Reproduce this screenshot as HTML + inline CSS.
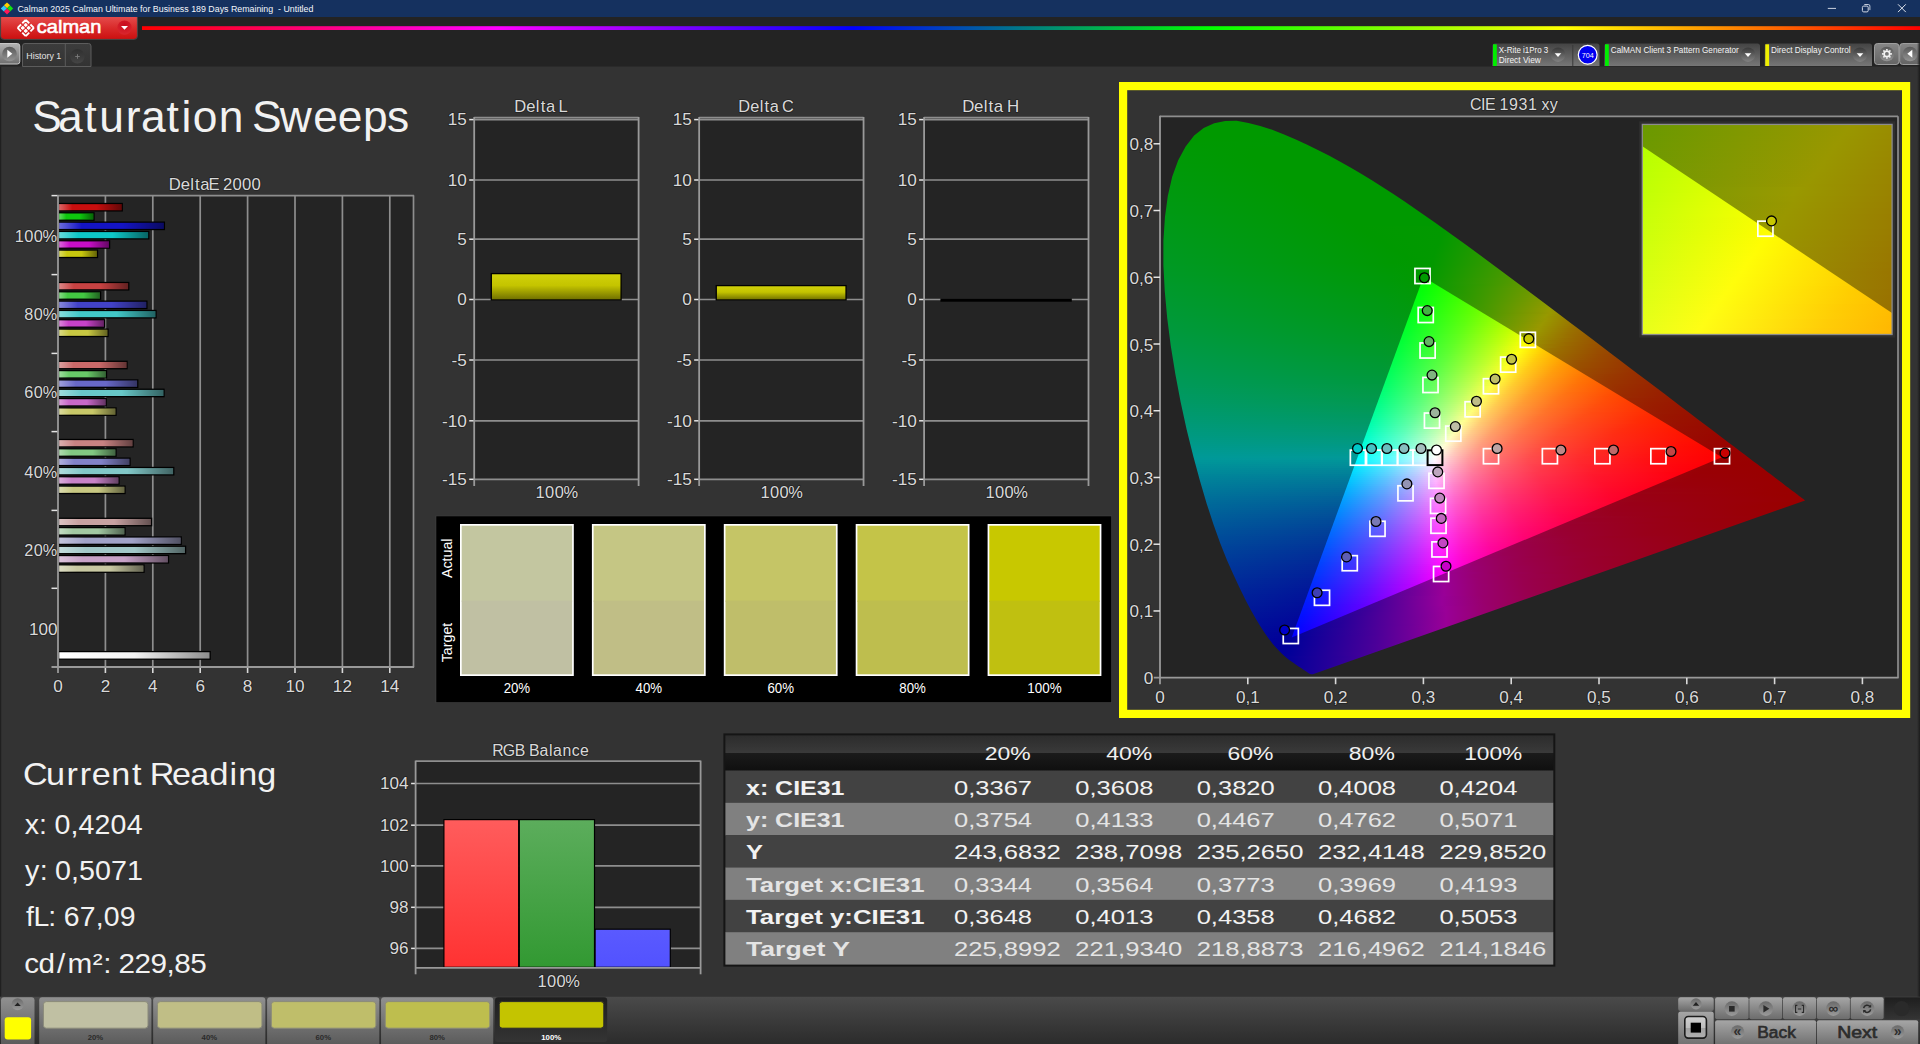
<!DOCTYPE html>
<html lang="en"><head><meta charset="utf-8"><title>Calman - Saturation Sweeps</title>
<style>
html,body{margin:0;padding:0;background:#333;overflow:hidden}
body{width:1920px;height:1044px;position:relative;font-family:"Liberation Sans",sans-serif}
svg{position:absolute;left:0;top:0;font-family:"Liberation Sans",sans-serif}
.g{position:absolute}
.h{paint-order:stroke;stroke:#222;stroke-width:1.6px;stroke-linejoin:round}
.g i{display:block;height:2px}
.r3 i{height:3px}
</style></head>
<body>
<svg width="1920" height="1044" viewBox="0 0 1920 1044">
<defs><linearGradient id="gred" x1="0" y1="0" x2="0" y2="1"><stop offset="0" stop-color="#e44b4b"/><stop offset=".5" stop-color="#d92a2a"/><stop offset="1" stop-color="#cc1010"/></linearGradient>
<radialGradient id="gdd" cx=".5" cy=".3" r=".8"><stop offset="0" stop-color="#c80c1c"/><stop offset="1" stop-color="#dc2a30"/></radialGradient>
<linearGradient id="grb" x1="142" y1="0" x2="1920" y2="0" gradientUnits="userSpaceOnUse"><stop offset="0" stop-color="#f00"/><stop offset=".2" stop-color="#f0f"/><stop offset=".4" stop-color="#00f"/><stop offset=".6" stop-color="#0f0"/><stop offset=".8" stop-color="#ff0"/><stop offset="1" stop-color="#f00"/></linearGradient>
<linearGradient id="gbtn" x1="0" y1="0" x2="0" y2="1"><stop offset="0" stop-color="#b4b4b4"/><stop offset="1" stop-color="#6e6e6e"/></linearGradient>
<linearGradient id="gcir" x1="0" y1="0" x2="0" y2="1"><stop offset="0" stop-color="#585858"/><stop offset="1" stop-color="#949494"/></linearGradient>
<linearGradient id="gtab" x1="0" y1="0" x2="0" y2="1"><stop offset="0" stop-color="#3c3c3c"/><stop offset="1" stop-color="#333"/></linearGradient>
<linearGradient id="gplus" x1="0" y1="0" x2="0" y2="1"><stop offset="0" stop-color="#303030"/><stop offset="1" stop-color="#454545"/></linearGradient>
<linearGradient id="gpan" x1="0" y1="0" x2="0" y2="1"><stop offset="0" stop-color="#444"/><stop offset="1" stop-color="#767676"/></linearGradient>
<linearGradient id="gdc" x1="0" y1="0" x2="0" y2="1"><stop offset="0" stop-color="#393939"/><stop offset="1" stop-color="#828282"/></linearGradient>
<linearGradient id="gbtn2" x1="0" y1="0" x2="0" y2="1"><stop offset="0" stop-color="#868686"/><stop offset="1" stop-color="#646464"/></linearGradient>
<linearGradient id="gedge2" x1="0" y1="0" x2="1" y2="0"><stop offset="0" stop-color="#1a1a1a" stop-opacity="0"/><stop offset="1" stop-color="#1a1a1a" stop-opacity=".95"/></linearGradient>
<linearGradient id="ggl" x1="0" y1="0" x2="1" y2="0"><stop offset="0" stop-color="#fff" stop-opacity=".38"/><stop offset=".22" stop-color="#fff" stop-opacity="0"/><stop offset=".6" stop-color="#000" stop-opacity="0"/><stop offset="1" stop-color="#000" stop-opacity=".5"/></linearGradient>
<linearGradient id="gwh" x1="0" y1="0" x2="1" y2="0"><stop offset="0" stop-color="#fff"/><stop offset=".5" stop-color="#f2f2f2"/><stop offset="1" stop-color="#8c8c8c"/></linearGradient>
<linearGradient id="gyb" x1="0" y1="0" x2="0" y2="1"><stop offset="0" stop-color="#d2d20a"/><stop offset=".45" stop-color="#c4c400"/><stop offset="1" stop-color="#6e6e00"/></linearGradient>
<linearGradient id="gr1" x1="0" y1="0" x2="0" y2="1"><stop offset="0" stop-color="#ff5c5c"/><stop offset="1" stop-color="#ff3232"/></linearGradient>
<linearGradient id="gg1" x1="0" y1="0" x2="0" y2="1"><stop offset="0" stop-color="#5cad5c"/><stop offset="1" stop-color="#329932"/></linearGradient>
<linearGradient id="gb1" x1="0" y1="0" x2="0" y2="1"><stop offset="0" stop-color="#5a5aff"/><stop offset="1" stop-color="#5252ff"/></linearGradient>
<linearGradient id="gth" x1="0" y1="0" x2="0" y2="1"><stop offset="0" stop-color="#2c2c2c"/><stop offset=".5" stop-color="#3a3a3a"/><stop offset=".5" stop-color="#1b1b1b"/><stop offset="1" stop-color="#0f0f0f"/></linearGradient>
<linearGradient id="gst" x1="0" y1="0" x2="0" y2="1"><stop offset="0" stop-color="#4a4a4a"/><stop offset="1" stop-color="#2b2b2b"/></linearGradient>
<linearGradient id="gsb" x1="0" y1="0" x2="0" y2="1"><stop offset="0" stop-color="#909090"/><stop offset="1" stop-color="#585858"/></linearGradient>
<linearGradient id="gsd" x1="0" y1="0" x2="0" y2="1"><stop offset="0" stop-color="#1e1e1e"/><stop offset="1" stop-color="#343434"/></linearGradient>
<linearGradient id="gcir2" x1="0" y1="0" x2="0" y2="1"><stop offset="0" stop-color="#6a6a6a"/><stop offset="1" stop-color="#9a9a9a"/></linearGradient>
<linearGradient id="gsb2" x1="0" y1="0" x2="0" y2="1"><stop offset="0" stop-color="#a6a6a6"/><stop offset="1" stop-color="#6c6c6c"/></linearGradient>
<linearGradient id="gstop" x1="0" y1="0" x2="0" y2="1"><stop offset="0" stop-color="#d0d0d0"/><stop offset=".55" stop-color="#bdbdbd"/><stop offset=".55" stop-color="#a2a2a2"/><stop offset="1" stop-color="#b0b0b0"/></linearGradient></defs>
<rect x="0" y="0" width="1920" height="17" fill="#15315f"/>
<rect x="0" y="17" width="1920" height="49.5" fill="#232323"/>
<g transform="translate(7,8.35) scale(.93)"><path d="M0-6.4L3.3-3.2 0 0-3.3-3.2z" fill="#ffd000"/><path d="M-3.4-3.1L-0.1.1-3.4 3.3-6.7.1z" fill="#30c8ff"/><path d="M3.4-3.1L6.7.1 3.4 3.3.1.1z" fill="#10e410"/><path d="M0 .2L3.3 3.4 0 6.6-3.3 3.4z" fill="#ff1858"/></g>
<text x="17.4" y="12.2" font-size="9.7" fill="#f4f6fa" textLength="296" lengthAdjust="spacingAndGlyphs" style="white-space:pre">Calman 2025 Calman Ultimate for Business 189 Days Remaining  - Untitled</text>
<line x1="1827.8" y1="8.4" x2="1836" y2="8.4" stroke="#ccd3e0" stroke-width="1"/>
<rect x="1862.4" y="6.1" width="5.8" height="5.8" rx="1.3" fill="none" stroke="#d4dae6"/><path d="M1864.3 4.5h4a1.6 1.6 0 0 1 1.6 1.6v4" fill="none" stroke="#d4dae6" stroke-width=".9"/>
<path d="M1898 4.3l7.8 7.8M1905.8 4.3l-7.8 7.8" stroke="#e0e5ee" stroke-width="1" fill="none"/>
<path d="M.8 17H137.2V36a3 3 0 0 1-3 3H3.8a3 3 0 0 1-3-3z" fill="url(#gred)"/><path d="M.6 17V36.2a3.2 3.2 0 0 0 3.2 3.2H134.2a3.2 3.2 0 0 0 3.2-3.2V17" fill="none" stroke="#4e4646" stroke-width="1"/>
<g transform="translate(25.75,27.95) rotate(45)" fill="#fff"><rect x="-5.75" y="-5.75" width="11.5" height="11.5" fill="none" stroke="#fff" stroke-width="1.9" stroke-linejoin="round" stroke-dasharray="4.9 1.7 4.9 0"/><rect x="-3.65" y="-3.65" width="3.1" height="3.1" rx=".5"/><rect x="-3.65" y="0.55" width="3.1" height="3.1" rx=".5"/><rect x="0.55" y="-3.65" width="3.1" height="3.1" rx=".5"/><rect x="0.55" y="0.55" width="3.1" height="3.1" rx=".5"/></g>
<text x="36.8" y="32.8" font-size="19.2" fill="#fff" textLength="64.6" lengthAdjust="spacingAndGlyphs" stroke="#fff" stroke-width=".6">calman</text>
<circle cx="124.5" cy="27.6" r="7.2" fill="url(#gdd)"/><path d="M121 26h7l-3.5 3.8z" fill="#fff"/>
<rect x="142" y="26.2" width="1778" height="3.8" fill="url(#grb)"/>
<rect x="-3" y="43.5" width="22.8" height="20.5" rx="2.5" fill="url(#gbtn)" stroke="#c8c8c8" stroke-width="1"/>
<circle cx="9.5" cy="54" r="7.3" fill="url(#gcir)"/><path d="M7.3 49.8v8l5-4z" fill="#fff"/>
<path d="M22.5 66.5V46a2.5 2.5 0 0 1 2.5-2.5H88.5a2.5 2.5 0 0 1 2.5 2.5V66.5z" fill="url(#gtab)" stroke="#5c5c5c" stroke-width="1"/>
<line x1="65.3" y1="44" x2="65.3" y2="66" stroke="#5c5c5c" stroke-width="1"/>
<text x="26.3" y="58.7" font-size="9.3" fill="#e4e4e4" textLength="35" lengthAdjust="spacingAndGlyphs">History 1</text>
<circle cx="77.4" cy="56.3" r="7.2" fill="url(#gplus)"/><path d="M75.2 56.5h4.6M77.5 54.2v4.6" stroke="#7a7a7a" stroke-width=".9"/>
<path d="M1492.5 66V46a2.5 2.5 0 0 1 2.5-2.5H1597a2.5 2.5 0 0 1 2.5 2.5V66z" fill="url(#gpan)"/><rect x="1493" y="44.3" width="3.8" height="21.7" fill="#0e0"/><text x="1498.8" y="52.6" font-size="8.7" fill="#f4f4f4" textLength="49.5" lengthAdjust="spacingAndGlyphs">X-Rite i1Pro 3</text><text x="1498.8" y="63.2" font-size="8.7" fill="#f4f4f4" textLength="42" lengthAdjust="spacingAndGlyphs">Direct View</text><circle cx="1558" cy="54.7" r="7.2" fill="url(#gdc)"/><path d="M1554.7 53.3h6.6l-3.3 3.6z" fill="#fff"/>
<line x1="1572.8" y1="45" x2="1572.8" y2="66" stroke="#3a3a3a" stroke-width="1"/>
<circle cx="1587.7" cy="54.7" r="9.4" fill="#0000f0" stroke="#fff" stroke-width="1.2"/>
<text x="1587.7" y="57.5" font-size="7.6" fill="#fff" text-anchor="middle" textLength="12" lengthAdjust="spacingAndGlyphs">704</text>
<path d="M1604.5 66V46a2.5 2.5 0 0 1 2.5-2.5H1757.5a2.5 2.5 0 0 1 2.5 2.5V66z" fill="url(#gpan)"/><rect x="1605" y="44.3" width="3.8" height="21.7" fill="#0e0"/><text x="1610.8" y="52.6" font-size="8.7" fill="#f4f4f4" textLength="128" lengthAdjust="spacingAndGlyphs">CalMAN Client 3 Pattern Generator</text><circle cx="1748" cy="54.7" r="7.2" fill="url(#gdc)"/><path d="M1744.7 53.3h6.6l-3.3 3.6z" fill="#fff"/>
<path d="M1764.8 66V46a2.5 2.5 0 0 1 2.5-2.5H1869.5a2.5 2.5 0 0 1 2.5 2.5V66z" fill="url(#gpan)"/><rect x="1765.3" y="44.3" width="3.8" height="21.7" fill="#f0f000"/><text x="1771.1" y="52.6" font-size="8.7" fill="#f4f4f4" textLength="79.5" lengthAdjust="spacingAndGlyphs">Direct Display Control</text><circle cx="1860" cy="54.7" r="7.2" fill="url(#gdc)"/><path d="M1856.7 53.3h6.6l-3.3 3.6z" fill="#fff"/>
<rect x="1874.5" y="43.5" width="24.5" height="21" rx="3" fill="url(#gbtn2)" stroke="#a6a6a6" stroke-width=".9"/>
<circle cx="1886.8" cy="54" r="7.3" fill="url(#gcir)"/>
<g transform="translate(1886.9,53.9)" stroke="#f4f4f4" fill="none"><circle r="2.8" stroke-width="1.75"/><path d="M0 3.3L0 4.95" stroke-width="1.6"/><path d="M-2.33 2.33L-3.5 3.5" stroke-width="1.6"/><path d="M-3.3 0L-4.95 0" stroke-width="1.6"/><path d="M-2.33 -2.33L-3.5 -3.5" stroke-width="1.6"/><path d="M0 -3.3L0 -4.95" stroke-width="1.6"/><path d="M2.33 -2.33L3.5 -3.5" stroke-width="1.6"/><path d="M3.3 0L4.95 0" stroke-width="1.6"/><path d="M2.33 2.33L3.5 3.5" stroke-width="1.6"/></g>
<rect x="1899.7" y="43.5" width="26" height="21" rx="3" fill="url(#gbtn2)" stroke="#a6a6a6" stroke-width=".9"/>
<circle cx="1910" cy="54" r="7.3" fill="url(#gcir)"/><path d="M1912.3 49.8v8l-5-4z" fill="#fff"/>
<rect x="1917" y="42" width="3" height="955" fill="url(#gedge2)"/>
<rect x="0" y="66.5" width="1.2" height="930.3" fill="#202020"/>
<text transform="translate(35.6,132) scale(0.9939,1)" x="-3.39 22.55 48.87 63.94 90.77 105.98 131.79 146.72 158.01 184.33 209.33 217.79 245.71 279.3 303.96 329.53 353.58" font-size="44.6" fill="#f2f2f2">Saturation Sweeps</text>
<rect x="58" y="195.6" width="355.5" height="471.4" fill="#242424"/>
<line x1="105.4" y1="195.6" x2="105.4" y2="667" stroke="#8e8e8e" stroke-width="1.7"/>
<line x1="152.8" y1="195.6" x2="152.8" y2="667" stroke="#8e8e8e" stroke-width="1.7"/>
<line x1="200.2" y1="195.6" x2="200.2" y2="667" stroke="#8e8e8e" stroke-width="1.7"/>
<line x1="247.6" y1="195.6" x2="247.6" y2="667" stroke="#8e8e8e" stroke-width="1.7"/>
<line x1="295" y1="195.6" x2="295" y2="667" stroke="#8e8e8e" stroke-width="1.7"/>
<line x1="342.4" y1="195.6" x2="342.4" y2="667" stroke="#8e8e8e" stroke-width="1.7"/>
<line x1="389.8" y1="195.6" x2="389.8" y2="667" stroke="#8e8e8e" stroke-width="1.7"/>
<line x1="58" y1="195.6" x2="414.1" y2="195.6" stroke="#8e8e8e" stroke-width="1.7"/>
<line x1="413.5" y1="195.6" x2="413.5" y2="667" stroke="#8e8e8e" stroke-width="1.7"/>
<line x1="51.5" y1="195.6" x2="58" y2="195.6" stroke="#e4e4e4" stroke-width="1.5"/>
<line x1="51.5" y1="274.6" x2="58" y2="274.6" stroke="#e4e4e4" stroke-width="1.5"/>
<line x1="51.5" y1="353.4" x2="58" y2="353.4" stroke="#e4e4e4" stroke-width="1.5"/>
<line x1="51.5" y1="431.6" x2="58" y2="431.6" stroke="#e4e4e4" stroke-width="1.5"/>
<line x1="51.5" y1="510.4" x2="58" y2="510.4" stroke="#e4e4e4" stroke-width="1.5"/>
<line x1="51.5" y1="588.3" x2="58" y2="588.3" stroke="#e4e4e4" stroke-width="1.5"/>
<line x1="105.4" y1="667" x2="105.4" y2="673" stroke="#d8d8d8" stroke-width="1.6"/>
<line x1="152.8" y1="667" x2="152.8" y2="673" stroke="#d8d8d8" stroke-width="1.6"/>
<line x1="200.2" y1="667" x2="200.2" y2="673" stroke="#d8d8d8" stroke-width="1.6"/>
<line x1="247.6" y1="667" x2="247.6" y2="673" stroke="#d8d8d8" stroke-width="1.6"/>
<line x1="295" y1="667" x2="295" y2="673" stroke="#d8d8d8" stroke-width="1.6"/>
<line x1="342.4" y1="667" x2="342.4" y2="673" stroke="#d8d8d8" stroke-width="1.6"/>
<line x1="389.8" y1="667" x2="389.8" y2="673" stroke="#d8d8d8" stroke-width="1.6"/>
<text transform="translate(53.23,691.5) scale(1.0582,1)" x="0" font-size="16.2" fill="#d9d9d9" class="h">0</text>
<text transform="translate(100.63,691.5) scale(1.0582,1)" x="0" font-size="16.2" fill="#d9d9d9" class="h">2</text>
<text transform="translate(148.03,691.5) scale(1.0582,1)" x="0" font-size="16.2" fill="#d9d9d9" class="h">4</text>
<text transform="translate(195.43,691.5) scale(1.0582,1)" x="0" font-size="16.2" fill="#d9d9d9" class="h">6</text>
<text transform="translate(242.83,691.5) scale(1.0582,1)" x="0" font-size="16.2" fill="#d9d9d9" class="h">8</text>
<text transform="translate(285.47,691.5) scale(1.0582,1)" x="0 9.01" font-size="16.2" fill="#d9d9d9" class="h">10</text>
<text transform="translate(332.87,691.5) scale(1.0582,1)" x="0 9.01" font-size="16.2" fill="#d9d9d9" class="h">12</text>
<text transform="translate(380.27,691.5) scale(1.0582,1)" x="0 9.01" font-size="16.2" fill="#d9d9d9" class="h">14</text>
<text transform="translate(14.55,242.1) scale(1.0148,1)" x="0.19 9.59 18.98 27.61" font-size="16.2" fill="#d9d9d9" class="h">100%</text>
<text transform="translate(24.09,320.1) scale(1.0028,1)" x="0.25 9.76 18.52" font-size="16.2" fill="#d9d9d9" class="h">80%</text>
<text transform="translate(24.09,398.3) scale(1.0028,1)" x="0.25 9.76 18.52" font-size="16.2" fill="#d9d9d9" class="h">60%</text>
<text transform="translate(24.09,478.2) scale(1.0028,1)" x="0.25 9.76 18.52" font-size="16.2" fill="#d9d9d9" class="h">40%</text>
<text transform="translate(24.09,555.9) scale(1.0028,1)" x="0.25 9.76 18.52" font-size="16.2" fill="#d9d9d9" class="h">20%</text>
<text transform="translate(29,634.6) scale(1.0582,1)" x="0 9.01 18.02" font-size="16.2" fill="#d9d9d9" class="h">100</text>
<text transform="translate(169.05,189.6) scale(1.0307,1)" x="-0.24 11.26 20.6 25.3 30.36 38.18 47.85 52.29 61.54 70.79 80.04" font-size="16.2" fill="#d9d9d9" class="h">DeltaE 2000</text>
<rect x="58.6" y="203.5" width="63.65" height="7.4" fill="#c80e0e" stroke="#000" stroke-width="1.3"/>
<rect x="58.6" y="204.1" width="63.05" height="6.2" fill="url(#ggl)"/>
<rect x="58.6" y="212.82" width="35.4" height="7.4" fill="#0ec80e" stroke="#000" stroke-width="1.3"/>
<rect x="58.6" y="213.42" width="34.8" height="6.2" fill="url(#ggl)"/>
<rect x="58.6" y="222.14" width="105.8" height="7.4" fill="#1414c4" stroke="#000" stroke-width="1.3"/>
<rect x="58.6" y="222.74" width="105.2" height="6.2" fill="url(#ggl)"/>
<rect x="58.6" y="231.46" width="90.15" height="7.4" fill="#0ec8c8" stroke="#000" stroke-width="1.3"/>
<rect x="58.6" y="232.06" width="89.55" height="6.2" fill="url(#ggl)"/>
<rect x="58.6" y="240.78" width="51" height="7.4" fill="#c80ec8" stroke="#000" stroke-width="1.3"/>
<rect x="58.6" y="241.38" width="50.4" height="6.2" fill="url(#ggl)"/>
<rect x="58.6" y="250.1" width="38.9" height="7.4" fill="#c8c80e" stroke="#000" stroke-width="1.3"/>
<rect x="58.6" y="250.7" width="38.3" height="6.2" fill="url(#ggl)"/>
<rect x="58.6" y="282.5" width="70.15" height="7.4" fill="#c84242" stroke="#000" stroke-width="1.3"/>
<rect x="58.6" y="283.1" width="69.55" height="6.2" fill="url(#ggl)"/>
<rect x="58.6" y="291.82" width="42" height="7.4" fill="#42c842" stroke="#000" stroke-width="1.3"/>
<rect x="58.6" y="292.42" width="41.4" height="6.2" fill="url(#ggl)"/>
<rect x="58.6" y="301.14" width="88.3" height="7.4" fill="#4242c8" stroke="#000" stroke-width="1.3"/>
<rect x="58.6" y="301.74" width="87.7" height="6.2" fill="url(#ggl)"/>
<rect x="58.6" y="310.46" width="97.4" height="7.4" fill="#42c8c8" stroke="#000" stroke-width="1.3"/>
<rect x="58.6" y="311.06" width="96.8" height="6.2" fill="url(#ggl)"/>
<rect x="58.6" y="319.78" width="46" height="7.4" fill="#c842c8" stroke="#000" stroke-width="1.3"/>
<rect x="58.6" y="320.38" width="45.4" height="6.2" fill="url(#ggl)"/>
<rect x="58.6" y="329.1" width="49.4" height="7.4" fill="#c8c842" stroke="#000" stroke-width="1.3"/>
<rect x="58.6" y="329.7" width="48.8" height="6.2" fill="url(#ggl)"/>
<rect x="58.6" y="361.3" width="68.5" height="7.4" fill="#c86868" stroke="#000" stroke-width="1.3"/>
<rect x="58.6" y="361.9" width="67.9" height="6.2" fill="url(#ggl)"/>
<rect x="58.6" y="370.62" width="47.9" height="7.4" fill="#68c868" stroke="#000" stroke-width="1.3"/>
<rect x="58.6" y="371.22" width="47.3" height="6.2" fill="url(#ggl)"/>
<rect x="58.6" y="379.94" width="79.15" height="7.4" fill="#6868c8" stroke="#000" stroke-width="1.3"/>
<rect x="58.6" y="380.54" width="78.55" height="6.2" fill="url(#ggl)"/>
<rect x="58.6" y="389.26" width="105.4" height="7.4" fill="#68c8c8" stroke="#000" stroke-width="1.3"/>
<rect x="58.6" y="389.86" width="104.8" height="6.2" fill="url(#ggl)"/>
<rect x="58.6" y="398.58" width="47.65" height="7.4" fill="#c868c8" stroke="#000" stroke-width="1.3"/>
<rect x="58.6" y="399.18" width="47.05" height="6.2" fill="url(#ggl)"/>
<rect x="58.6" y="407.9" width="57.4" height="7.4" fill="#c8c868" stroke="#000" stroke-width="1.3"/>
<rect x="58.6" y="408.5" width="56.8" height="6.2" fill="url(#ggl)"/>
<rect x="58.6" y="439.5" width="74.5" height="7.4" fill="#c88282" stroke="#000" stroke-width="1.3"/>
<rect x="58.6" y="440.1" width="73.9" height="6.2" fill="url(#ggl)"/>
<rect x="58.6" y="448.82" width="57.4" height="7.4" fill="#82c882" stroke="#000" stroke-width="1.3"/>
<rect x="58.6" y="449.42" width="56.8" height="6.2" fill="url(#ggl)"/>
<rect x="58.6" y="458.14" width="71.4" height="7.4" fill="#8282c8" stroke="#000" stroke-width="1.3"/>
<rect x="58.6" y="458.74" width="70.8" height="6.2" fill="url(#ggl)"/>
<rect x="58.6" y="467.46" width="115.15" height="7.4" fill="#82c8c8" stroke="#000" stroke-width="1.3"/>
<rect x="58.6" y="468.06" width="114.55" height="6.2" fill="url(#ggl)"/>
<rect x="58.6" y="476.78" width="60.4" height="7.4" fill="#c882c8" stroke="#000" stroke-width="1.3"/>
<rect x="58.6" y="477.38" width="59.8" height="6.2" fill="url(#ggl)"/>
<rect x="58.6" y="486.1" width="66.4" height="7.4" fill="#c8c882" stroke="#000" stroke-width="1.3"/>
<rect x="58.6" y="486.7" width="65.8" height="6.2" fill="url(#ggl)"/>
<rect x="58.6" y="518.3" width="93" height="7.4" fill="#c8a2a2" stroke="#000" stroke-width="1.3"/>
<rect x="58.6" y="518.9" width="92.4" height="6.2" fill="url(#ggl)"/>
<rect x="58.6" y="527.62" width="66.4" height="7.4" fill="#a2c8a2" stroke="#000" stroke-width="1.3"/>
<rect x="58.6" y="528.22" width="65.8" height="6.2" fill="url(#ggl)"/>
<rect x="58.6" y="536.94" width="122.65" height="7.4" fill="#a2a2c8" stroke="#000" stroke-width="1.3"/>
<rect x="58.6" y="537.54" width="122.05" height="6.2" fill="url(#ggl)"/>
<rect x="58.6" y="546.26" width="127" height="7.4" fill="#a2c8c8" stroke="#000" stroke-width="1.3"/>
<rect x="58.6" y="546.86" width="126.4" height="6.2" fill="url(#ggl)"/>
<rect x="58.6" y="555.58" width="109.9" height="7.4" fill="#c8a2c8" stroke="#000" stroke-width="1.3"/>
<rect x="58.6" y="556.18" width="109.3" height="6.2" fill="url(#ggl)"/>
<rect x="58.6" y="564.9" width="85.4" height="7.4" fill="#c8c8a2" stroke="#000" stroke-width="1.3"/>
<rect x="58.6" y="565.5" width="84.8" height="6.2" fill="url(#ggl)"/>
<rect x="58.6" y="651.6" width="151.6" height="7.6" fill="url(#gwh)" stroke="#000" stroke-width="1.3"/>
<line x1="58" y1="195" x2="58" y2="673" stroke="#999" stroke-width="1.8"/>
<line x1="51.5" y1="667" x2="414.1" y2="667" stroke="#999" stroke-width="1.8"/>
<rect x="474.2" y="117.6" width="164.4" height="361.7" fill="#242424"/>
<line x1="474.2" y1="119.6" x2="638.6" y2="119.6" stroke="#8e8e8e" stroke-width="1.7"/>
<line x1="469.2" y1="119.6" x2="474.2" y2="119.6" stroke="#e4e4e4" stroke-width="1.5"/>
<text transform="translate(447.83,125.3) scale(1.0582,1)" x="0 9.01" font-size="16.2" fill="#d9d9d9" class="h">15</text>
<line x1="474.2" y1="180" x2="638.6" y2="180" stroke="#8e8e8e" stroke-width="1.7"/>
<line x1="469.2" y1="180" x2="474.2" y2="180" stroke="#e4e4e4" stroke-width="1.5"/>
<text transform="translate(447.83,185.7) scale(1.0582,1)" x="0 9.01" font-size="16.2" fill="#d9d9d9" class="h">10</text>
<line x1="474.2" y1="239.2" x2="638.6" y2="239.2" stroke="#8e8e8e" stroke-width="1.7"/>
<line x1="469.2" y1="239.2" x2="474.2" y2="239.2" stroke="#e4e4e4" stroke-width="1.5"/>
<text transform="translate(457.37,244.9) scale(1.0582,1)" x="0" font-size="16.2" fill="#d9d9d9" class="h">5</text>
<line x1="474.2" y1="299.5" x2="638.6" y2="299.5" stroke="#8e8e8e" stroke-width="1.7"/>
<line x1="469.2" y1="299.5" x2="474.2" y2="299.5" stroke="#e4e4e4" stroke-width="1.5"/>
<text transform="translate(457.37,305.2) scale(1.0582,1)" x="0" font-size="16.2" fill="#d9d9d9" class="h">0</text>
<line x1="474.2" y1="360" x2="638.6" y2="360" stroke="#8e8e8e" stroke-width="1.7"/>
<line x1="469.2" y1="360" x2="474.2" y2="360" stroke="#e4e4e4" stroke-width="1.5"/>
<text transform="translate(451.61,365.7) scale(1.0616,1)" x="0.01 5.41" font-size="16.2" fill="#d9d9d9" class="h">-5</text>
<line x1="474.2" y1="420.8" x2="638.6" y2="420.8" stroke="#8e8e8e" stroke-width="1.7"/>
<line x1="469.2" y1="420.8" x2="474.2" y2="420.8" stroke="#e4e4e4" stroke-width="1.5"/>
<text transform="translate(442.07,426.5) scale(1.0603,1)" x="0.02 5.42 14.41" font-size="16.2" fill="#d9d9d9" class="h">-10</text>
<line x1="474.2" y1="479.3" x2="638.6" y2="479.3" stroke="#8e8e8e" stroke-width="1.7"/>
<line x1="469.2" y1="479.3" x2="474.2" y2="479.3" stroke="#e4e4e4" stroke-width="1.5"/>
<text transform="translate(442.07,485) scale(1.0603,1)" x="0.02 5.42 14.41" font-size="16.2" fill="#d9d9d9" class="h">-15</text>
<line x1="474.2" y1="117.6" x2="638.6" y2="117.6" stroke="#8e8e8e" stroke-width="1.7"/>
<line x1="474.2" y1="117" x2="474.2" y2="486" stroke="#999" stroke-width="1.8"/>
<line x1="638.6" y1="117" x2="638.6" y2="486" stroke="#999" stroke-width="1.8"/>
<text transform="translate(514.55,112.3) scale(1.0226,1)" x="-0.19 11.39 20.78 25.52 30.64 39.27 42.96" font-size="16.2" fill="#d9d9d9" class="h">Delta L</text>
<text transform="translate(535.38,497.6) scale(1.0148,1)" x="0.19 9.59 18.98 27.61" font-size="16.2" fill="#d9d9d9" class="h">100%</text>
<rect x="491.3" y="273.6" width="129.8" height="26.4" fill="url(#gyb)" stroke="#000" stroke-width="1.3"/>
<rect x="699.15" y="117.6" width="164.4" height="361.7" fill="#242424"/>
<line x1="699.15" y1="119.6" x2="863.55" y2="119.6" stroke="#8e8e8e" stroke-width="1.7"/>
<line x1="694.15" y1="119.6" x2="699.15" y2="119.6" stroke="#e4e4e4" stroke-width="1.5"/>
<text transform="translate(672.78,125.3) scale(1.0582,1)" x="0 9.01" font-size="16.2" fill="#d9d9d9" class="h">15</text>
<line x1="699.15" y1="180" x2="863.55" y2="180" stroke="#8e8e8e" stroke-width="1.7"/>
<line x1="694.15" y1="180" x2="699.15" y2="180" stroke="#e4e4e4" stroke-width="1.5"/>
<text transform="translate(672.78,185.7) scale(1.0582,1)" x="0 9.01" font-size="16.2" fill="#d9d9d9" class="h">10</text>
<line x1="699.15" y1="239.2" x2="863.55" y2="239.2" stroke="#8e8e8e" stroke-width="1.7"/>
<line x1="694.15" y1="239.2" x2="699.15" y2="239.2" stroke="#e4e4e4" stroke-width="1.5"/>
<text transform="translate(682.32,244.9) scale(1.0582,1)" x="0" font-size="16.2" fill="#d9d9d9" class="h">5</text>
<line x1="699.15" y1="299.5" x2="863.55" y2="299.5" stroke="#8e8e8e" stroke-width="1.7"/>
<line x1="694.15" y1="299.5" x2="699.15" y2="299.5" stroke="#e4e4e4" stroke-width="1.5"/>
<text transform="translate(682.32,305.2) scale(1.0582,1)" x="0" font-size="16.2" fill="#d9d9d9" class="h">0</text>
<line x1="699.15" y1="360" x2="863.55" y2="360" stroke="#8e8e8e" stroke-width="1.7"/>
<line x1="694.15" y1="360" x2="699.15" y2="360" stroke="#e4e4e4" stroke-width="1.5"/>
<text transform="translate(676.56,365.7) scale(1.0616,1)" x="0.01 5.41" font-size="16.2" fill="#d9d9d9" class="h">-5</text>
<line x1="699.15" y1="420.8" x2="863.55" y2="420.8" stroke="#8e8e8e" stroke-width="1.7"/>
<line x1="694.15" y1="420.8" x2="699.15" y2="420.8" stroke="#e4e4e4" stroke-width="1.5"/>
<text transform="translate(667.02,426.5) scale(1.0603,1)" x="0.02 5.42 14.41" font-size="16.2" fill="#d9d9d9" class="h">-10</text>
<line x1="699.15" y1="479.3" x2="863.55" y2="479.3" stroke="#8e8e8e" stroke-width="1.7"/>
<line x1="694.15" y1="479.3" x2="699.15" y2="479.3" stroke="#e4e4e4" stroke-width="1.5"/>
<text transform="translate(667.02,485) scale(1.0603,1)" x="0.02 5.42 14.41" font-size="16.2" fill="#d9d9d9" class="h">-15</text>
<line x1="699.15" y1="117.6" x2="863.55" y2="117.6" stroke="#8e8e8e" stroke-width="1.7"/>
<line x1="699.15" y1="117" x2="699.15" y2="486" stroke="#999" stroke-width="1.8"/>
<line x1="863.55" y1="117" x2="863.55" y2="486" stroke="#999" stroke-width="1.8"/>
<text transform="translate(738.44,112.3) scale(1.011,1)" x="-0.13 11.57 21.04 25.84 31.04 39.75 43.21" font-size="16.2" fill="#d9d9d9" class="h">Delta C</text>
<text transform="translate(760.33,497.6) scale(1.0148,1)" x="0.19 9.59 18.98 27.61" font-size="16.2" fill="#d9d9d9" class="h">100%</text>
<rect x="716.25" y="285.6" width="129.8" height="14.4" fill="url(#gyb)" stroke="#000" stroke-width="1.3"/>
<rect x="924.1" y="117.6" width="164.4" height="361.7" fill="#242424"/>
<line x1="924.1" y1="119.6" x2="1088.5" y2="119.6" stroke="#8e8e8e" stroke-width="1.7"/>
<line x1="919.1" y1="119.6" x2="924.1" y2="119.6" stroke="#e4e4e4" stroke-width="1.5"/>
<text transform="translate(897.73,125.3) scale(1.0582,1)" x="0 9.01" font-size="16.2" fill="#d9d9d9" class="h">15</text>
<line x1="924.1" y1="180" x2="1088.5" y2="180" stroke="#8e8e8e" stroke-width="1.7"/>
<line x1="919.1" y1="180" x2="924.1" y2="180" stroke="#e4e4e4" stroke-width="1.5"/>
<text transform="translate(897.73,185.7) scale(1.0582,1)" x="0 9.01" font-size="16.2" fill="#d9d9d9" class="h">10</text>
<line x1="924.1" y1="239.2" x2="1088.5" y2="239.2" stroke="#8e8e8e" stroke-width="1.7"/>
<line x1="919.1" y1="239.2" x2="924.1" y2="239.2" stroke="#e4e4e4" stroke-width="1.5"/>
<text transform="translate(907.27,244.9) scale(1.0582,1)" x="0" font-size="16.2" fill="#d9d9d9" class="h">5</text>
<line x1="924.1" y1="299.5" x2="1088.5" y2="299.5" stroke="#8e8e8e" stroke-width="1.7"/>
<line x1="919.1" y1="299.5" x2="924.1" y2="299.5" stroke="#e4e4e4" stroke-width="1.5"/>
<text transform="translate(907.27,305.2) scale(1.0582,1)" x="0" font-size="16.2" fill="#d9d9d9" class="h">0</text>
<line x1="924.1" y1="360" x2="1088.5" y2="360" stroke="#8e8e8e" stroke-width="1.7"/>
<line x1="919.1" y1="360" x2="924.1" y2="360" stroke="#e4e4e4" stroke-width="1.5"/>
<text transform="translate(901.51,365.7) scale(1.0616,1)" x="0.01 5.41" font-size="16.2" fill="#d9d9d9" class="h">-5</text>
<line x1="924.1" y1="420.8" x2="1088.5" y2="420.8" stroke="#8e8e8e" stroke-width="1.7"/>
<line x1="919.1" y1="420.8" x2="924.1" y2="420.8" stroke="#e4e4e4" stroke-width="1.5"/>
<text transform="translate(891.97,426.5) scale(1.0603,1)" x="0.02 5.42 14.41" font-size="16.2" fill="#d9d9d9" class="h">-10</text>
<line x1="924.1" y1="479.3" x2="1088.5" y2="479.3" stroke="#8e8e8e" stroke-width="1.7"/>
<line x1="919.1" y1="479.3" x2="924.1" y2="479.3" stroke="#e4e4e4" stroke-width="1.5"/>
<text transform="translate(891.97,485) scale(1.0603,1)" x="0.02 5.42 14.41" font-size="16.2" fill="#d9d9d9" class="h">-15</text>
<line x1="924.1" y1="117.6" x2="1088.5" y2="117.6" stroke="#8e8e8e" stroke-width="1.7"/>
<line x1="924.1" y1="117" x2="924.1" y2="486" stroke="#999" stroke-width="1.8"/>
<line x1="1088.5" y1="117" x2="1088.5" y2="486" stroke="#999" stroke-width="1.8"/>
<text transform="translate(962.55,112.3) scale(1.0423,1)" x="-0.3 11.09 20.35 25 29.98 38.48 42.55" font-size="16.2" fill="#d9d9d9" class="h">Delta H</text>
<text transform="translate(985.28,497.6) scale(1.0148,1)" x="0.19 9.59 18.98 27.61" font-size="16.2" fill="#d9d9d9" class="h">100%</text>
<rect x="940.4" y="298.5" width="131.4" height="3.2" fill="#000"/>
<rect x="435.3" y="515.5" width="676.9" height="187.7" fill="#3b3b3b"/>
<rect x="436.3" y="516.3" width="674.9" height="185.9" fill="#000"/>
<rect x="460" y="524" width="113.8" height="152" fill="#fff"/>
<rect x="461.7" y="525.7" width="110.4" height="76" fill="#c3c6a0"/>
<rect x="461.7" y="600.6" width="110.4" height="73.7" fill="#c0c0a3"/>
<text x="516.9" y="693" font-size="14.3" fill="#fff" text-anchor="middle" textLength="26.55" lengthAdjust="spacingAndGlyphs">20%</text>
<rect x="591.9" y="524" width="113.8" height="152" fill="#fff"/>
<rect x="593.6" y="525.7" width="110.4" height="76" fill="#c5c684"/>
<rect x="593.6" y="600.6" width="110.4" height="73.7" fill="#c0be86"/>
<text x="648.8" y="693" font-size="14.3" fill="#fff" text-anchor="middle" textLength="26.55" lengthAdjust="spacingAndGlyphs">40%</text>
<rect x="723.8" y="524" width="113.8" height="152" fill="#fff"/>
<rect x="725.5" y="525.7" width="110.4" height="76" fill="#c5c566"/>
<rect x="725.5" y="600.6" width="110.4" height="73.7" fill="#bfbe6a"/>
<text x="780.7" y="693" font-size="14.3" fill="#fff" text-anchor="middle" textLength="26.55" lengthAdjust="spacingAndGlyphs">60%</text>
<rect x="855.7" y="524" width="113.8" height="152" fill="#fff"/>
<rect x="857.4" y="525.7" width="110.4" height="76" fill="#c4c448"/>
<rect x="857.4" y="600.6" width="110.4" height="73.7" fill="#bebe4e"/>
<text x="912.6" y="693" font-size="14.3" fill="#fff" text-anchor="middle" textLength="26.55" lengthAdjust="spacingAndGlyphs">80%</text>
<rect x="987.6" y="524" width="113.8" height="152" fill="#fff"/>
<rect x="989.3" y="525.7" width="110.4" height="76" fill="#c8c800"/>
<rect x="989.3" y="600.6" width="110.4" height="73.7" fill="#c0c010"/>
<text x="1044.5" y="693" font-size="14.3" fill="#fff" text-anchor="middle" textLength="34.34" lengthAdjust="spacingAndGlyphs">100%</text>
<g transform="translate(451.8,558.3) rotate(-90)"><text x="0" y="0" font-size="14.3" fill="#fff" text-anchor="middle" textLength="39.5" lengthAdjust="spacingAndGlyphs">Actual</text></g>
<g transform="translate(451.8,642.5) rotate(-90)"><text x="0" y="0" font-size="14.3" fill="#fff" text-anchor="middle" textLength="39.5" lengthAdjust="spacingAndGlyphs">Target</text></g>
<rect x="1123.1" y="86.1" width="783" height="627.8" fill="none" stroke="#ff0" stroke-width="8.2"/>
<rect x="1160" y="116.3" width="738" height="561.4" fill="#242424"/>
<line x1="1160" y1="116.3" x2="1898" y2="116.3" stroke="#8e8e8e" stroke-width="1.7"/>
<line x1="1898" y1="116.3" x2="1898" y2="677.7" stroke="#8e8e8e" stroke-width="1.7"/>
<line x1="1160" y1="115.7" x2="1160" y2="684.2" stroke="#999" stroke-width="1.8"/>
<line x1="1153.5" y1="677.7" x2="1898.6" y2="677.7" stroke="#999" stroke-width="1.8"/>
<text transform="translate(1155.23,702.6) scale(1.0582,1)" x="0" font-size="16.2" fill="#d9d9d9" class="h">0</text>
<text transform="translate(1143.77,684.2) scale(1.0582,1)" x="0" font-size="16.2" fill="#d9d9d9" class="h">0</text>
<line x1="1247.8" y1="677.7" x2="1247.8" y2="684.2" stroke="#d8d8d8" stroke-width="1.6"/>
<line x1="1153.5" y1="610.96" x2="1160" y2="610.96" stroke="#e4e4e4" stroke-width="1.5"/>
<text transform="translate(1235.92,702.6) scale(1.0551,1)" x="0.01 9.01 13.5" font-size="16.2" fill="#d9d9d9" class="h">0,1</text>
<text transform="translate(1129.54,617.46) scale(1.0551,1)" x="0.01 9.01 13.5" font-size="16.2" fill="#d9d9d9" class="h">0,1</text>
<line x1="1335.6" y1="677.7" x2="1335.6" y2="684.2" stroke="#d8d8d8" stroke-width="1.6"/>
<line x1="1153.5" y1="544.22" x2="1160" y2="544.22" stroke="#e4e4e4" stroke-width="1.5"/>
<text transform="translate(1323.72,702.6) scale(1.0551,1)" x="0.01 9.01 13.5" font-size="16.2" fill="#d9d9d9" class="h">0,2</text>
<text transform="translate(1129.54,550.72) scale(1.0551,1)" x="0.01 9.01 13.5" font-size="16.2" fill="#d9d9d9" class="h">0,2</text>
<line x1="1423.4" y1="677.7" x2="1423.4" y2="684.2" stroke="#d8d8d8" stroke-width="1.6"/>
<line x1="1153.5" y1="477.48" x2="1160" y2="477.48" stroke="#e4e4e4" stroke-width="1.5"/>
<text transform="translate(1411.52,702.6) scale(1.0551,1)" x="0.01 9.01 13.5" font-size="16.2" fill="#d9d9d9" class="h">0,3</text>
<text transform="translate(1129.54,483.98) scale(1.0551,1)" x="0.01 9.01 13.5" font-size="16.2" fill="#d9d9d9" class="h">0,3</text>
<line x1="1511.2" y1="677.7" x2="1511.2" y2="684.2" stroke="#d8d8d8" stroke-width="1.6"/>
<line x1="1153.5" y1="410.74" x2="1160" y2="410.74" stroke="#e4e4e4" stroke-width="1.5"/>
<text transform="translate(1499.32,702.6) scale(1.0551,1)" x="0.01 9.01 13.5" font-size="16.2" fill="#d9d9d9" class="h">0,4</text>
<text transform="translate(1129.54,417.24) scale(1.0551,1)" x="0.01 9.01 13.5" font-size="16.2" fill="#d9d9d9" class="h">0,4</text>
<line x1="1599" y1="677.7" x2="1599" y2="684.2" stroke="#d8d8d8" stroke-width="1.6"/>
<line x1="1153.5" y1="344" x2="1160" y2="344" stroke="#e4e4e4" stroke-width="1.5"/>
<text transform="translate(1587.12,702.6) scale(1.0551,1)" x="0.01 9.01 13.5" font-size="16.2" fill="#d9d9d9" class="h">0,5</text>
<text transform="translate(1129.54,350.5) scale(1.0551,1)" x="0.01 9.01 13.5" font-size="16.2" fill="#d9d9d9" class="h">0,5</text>
<line x1="1686.8" y1="677.7" x2="1686.8" y2="684.2" stroke="#d8d8d8" stroke-width="1.6"/>
<line x1="1153.5" y1="277.26" x2="1160" y2="277.26" stroke="#e4e4e4" stroke-width="1.5"/>
<text transform="translate(1674.92,702.6) scale(1.0551,1)" x="0.01 9.01 13.5" font-size="16.2" fill="#d9d9d9" class="h">0,6</text>
<text transform="translate(1129.54,283.76) scale(1.0551,1)" x="0.01 9.01 13.5" font-size="16.2" fill="#d9d9d9" class="h">0,6</text>
<line x1="1774.6" y1="677.7" x2="1774.6" y2="684.2" stroke="#d8d8d8" stroke-width="1.6"/>
<line x1="1153.5" y1="210.52" x2="1160" y2="210.52" stroke="#e4e4e4" stroke-width="1.5"/>
<text transform="translate(1762.72,702.6) scale(1.0551,1)" x="0.01 9.01 13.5" font-size="16.2" fill="#d9d9d9" class="h">0,7</text>
<text transform="translate(1129.54,217.02) scale(1.0551,1)" x="0.01 9.01 13.5" font-size="16.2" fill="#d9d9d9" class="h">0,7</text>
<line x1="1862.4" y1="677.7" x2="1862.4" y2="684.2" stroke="#d8d8d8" stroke-width="1.6"/>
<line x1="1153.5" y1="143.78" x2="1160" y2="143.78" stroke="#e4e4e4" stroke-width="1.5"/>
<text transform="translate(1850.52,702.6) scale(1.0551,1)" x="0.01 9.01 13.5" font-size="16.2" fill="#d9d9d9" class="h">0,8</text>
<text transform="translate(1129.54,150.28) scale(1.0551,1)" x="0.01 9.01 13.5" font-size="16.2" fill="#d9d9d9" class="h">0,8</text>
<text transform="translate(1470.87,110.3) scale(0.9888,1)" x="-0.78 10.29 14.18 24.13 28.84 38.48 48.13 57.77 67 71.47 79.89" font-size="16.2" fill="#d9d9d9" class="h">CIE 1931 xy</text>
<text transform="translate(25.2,785.4) scale(1.0942,1)" x="-1.98 19.06 37.76 49.91 60.94 78.54 97.71 107.32 113.78 134.2 150.9 168.4 186.76 194.7 212.06" font-size="31.2" fill="#f2f2f2">Current Reading</text>
<text transform="translate(25.1,833.7) scale(1.05,1)" x="-0.27 13.32 20.76 28.03 43.22 50.84 66.13 81.42 96.7" font-size="27.2" fill="#f2f2f2">x: 0,4204</text>
<text transform="translate(25.1,880) scale(1.0544,1)" x="-0.01 13.82 21.22 28.43 43.56 51.12 66.33 81.54 96.74" font-size="27.2" fill="#f2f2f2">y: 0,5071</text>
<text transform="translate(25.1,926.3) scale(1.0438,1)" x="0.84 8.04 22.24 29.72 37.03 52.38 67.61 75.28 90.63" font-size="27.2" fill="#f2f2f2">fL: 67,09</text>
<text transform="translate(25.1,972.6) scale(1.0913,1)" x="-0.68 12.28 29.25 38.85 62.07 71.55 78.7 85.52 100.19 114.85 129.58 136.74 151.41" font-size="27.2" fill="#f2f2f2">cd/m²: 229,85</text>
<rect x="415.6" y="761.2" width="285" height="206.6" fill="#242424"/>
<line x1="415.6" y1="783.5" x2="700.6" y2="783.5" stroke="#8e8e8e" stroke-width="1.7"/>
<line x1="411.1" y1="783.5" x2="415.6" y2="783.5" stroke="#e4e4e4" stroke-width="1.5"/>
<text transform="translate(380,789.2) scale(1.0582,1)" x="0 9.01 18.02" font-size="16.2" fill="#d9d9d9" class="h">104</text>
<line x1="415.6" y1="825.2" x2="700.6" y2="825.2" stroke="#8e8e8e" stroke-width="1.7"/>
<line x1="411.1" y1="825.2" x2="415.6" y2="825.2" stroke="#e4e4e4" stroke-width="1.5"/>
<text transform="translate(380,830.9) scale(1.0582,1)" x="0 9.01 18.02" font-size="16.2" fill="#d9d9d9" class="h">102</text>
<line x1="415.6" y1="865.8" x2="700.6" y2="865.8" stroke="#8e8e8e" stroke-width="1.7"/>
<line x1="411.1" y1="865.8" x2="415.6" y2="865.8" stroke="#e4e4e4" stroke-width="1.5"/>
<text transform="translate(380,871.5) scale(1.0582,1)" x="0 9.01 18.02" font-size="16.2" fill="#d9d9d9" class="h">100</text>
<line x1="415.6" y1="907.3" x2="700.6" y2="907.3" stroke="#8e8e8e" stroke-width="1.7"/>
<line x1="411.1" y1="907.3" x2="415.6" y2="907.3" stroke="#e4e4e4" stroke-width="1.5"/>
<text transform="translate(389.53,913) scale(1.0582,1)" x="0 9.01" font-size="16.2" fill="#d9d9d9" class="h">98</text>
<line x1="415.6" y1="948.4" x2="700.6" y2="948.4" stroke="#8e8e8e" stroke-width="1.7"/>
<line x1="411.1" y1="948.4" x2="415.6" y2="948.4" stroke="#e4e4e4" stroke-width="1.5"/>
<text transform="translate(389.53,954.1) scale(1.0582,1)" x="0 9.01" font-size="16.2" fill="#d9d9d9" class="h">96</text>
<line x1="415.6" y1="761.2" x2="700.6" y2="761.2" stroke="#8e8e8e" stroke-width="1.7"/>
<line x1="415.6" y1="760.6" x2="415.6" y2="974.3" stroke="#999" stroke-width="1.8"/>
<line x1="700.6" y1="760.6" x2="700.6" y2="974.3" stroke="#999" stroke-width="1.8"/>
<rect x="443.9" y="819.6" width="74.8" height="147.7" fill="url(#gr1)" stroke="#000" stroke-width="1.2"/>
<rect x="519.3" y="819.6" width="75.2" height="147.7" fill="url(#gg1)" stroke="#000" stroke-width="1.2"/>
<rect x="595.1" y="929.2" width="75.2" height="38.1" fill="url(#gb1)" stroke="#000" stroke-width="1.2"/>
<line x1="415.6" y1="967.8" x2="700.6" y2="967.8" stroke="#999" stroke-width="1.8"/>
<text transform="translate(492.92,755.7) scale(0.9797,1)" x="-0.64 10.09 22.18 32.72 36.96 47.68 57.19 61.29 70.93 80.49 88.87" font-size="16.2" fill="#d9d9d9" class="h">RGB Balance</text>
<text transform="translate(537.28,986.6) scale(1.0148,1)" x="0.19 9.59 18.98 27.61" font-size="16.2" fill="#d9d9d9" class="h">100%</text>
<rect x="723.4" y="733.4" width="831.9" height="233.2" fill="#151515"/>
<rect x="725.4" y="735.4" width="827.9" height="35.2" fill="url(#gth)"/>
<text x="1007.8" y="759.8" font-size="17.6" fill="#f0f0f0" text-anchor="middle" textLength="46" lengthAdjust="spacingAndGlyphs">20%</text>
<text x="1129.15" y="759.8" font-size="17.6" fill="#f0f0f0" text-anchor="middle" textLength="46" lengthAdjust="spacingAndGlyphs">40%</text>
<text x="1250.5" y="759.8" font-size="17.6" fill="#f0f0f0" text-anchor="middle" textLength="46" lengthAdjust="spacingAndGlyphs">60%</text>
<text x="1371.85" y="759.8" font-size="17.6" fill="#f0f0f0" text-anchor="middle" textLength="46" lengthAdjust="spacingAndGlyphs">80%</text>
<text x="1493.2" y="759.8" font-size="17.6" fill="#f0f0f0" text-anchor="middle" textLength="58" lengthAdjust="spacingAndGlyphs">100%</text>
<rect x="725.4" y="770.5" width="827.9" height="32.6" fill="#424242"/>
<text x="746" y="794.8" font-size="19.4" fill="#f2f2f2" font-weight="bold" textLength="98.5" lengthAdjust="spacingAndGlyphs">x: CIE31</text>
<text x="954" y="794.8" font-size="19.6" fill="#f2f2f2" textLength="78" lengthAdjust="spacingAndGlyphs">0,3367</text>
<text x="1075.35" y="794.8" font-size="19.6" fill="#f2f2f2" textLength="78" lengthAdjust="spacingAndGlyphs">0,3608</text>
<text x="1196.7" y="794.8" font-size="19.6" fill="#f2f2f2" textLength="78" lengthAdjust="spacingAndGlyphs">0,3820</text>
<text x="1318.05" y="794.8" font-size="19.6" fill="#f2f2f2" textLength="78" lengthAdjust="spacingAndGlyphs">0,4008</text>
<text x="1439.4" y="794.8" font-size="19.6" fill="#f2f2f2" textLength="78" lengthAdjust="spacingAndGlyphs">0,4204</text>
<rect x="725.4" y="802.83" width="827.9" height="32.6" fill="#808080"/>
<text x="746" y="827.13" font-size="19.4" fill="#e4e4e4" font-weight="bold" textLength="98.5" lengthAdjust="spacingAndGlyphs">y: CIE31</text>
<text x="954" y="827.13" font-size="19.6" fill="#e4e4e4" textLength="78" lengthAdjust="spacingAndGlyphs">0,3754</text>
<text x="1075.35" y="827.13" font-size="19.6" fill="#e4e4e4" textLength="78" lengthAdjust="spacingAndGlyphs">0,4133</text>
<text x="1196.7" y="827.13" font-size="19.6" fill="#e4e4e4" textLength="78" lengthAdjust="spacingAndGlyphs">0,4467</text>
<text x="1318.05" y="827.13" font-size="19.6" fill="#e4e4e4" textLength="78" lengthAdjust="spacingAndGlyphs">0,4762</text>
<text x="1439.4" y="827.13" font-size="19.6" fill="#e4e4e4" textLength="78" lengthAdjust="spacingAndGlyphs">0,5071</text>
<rect x="725.4" y="835.16" width="827.9" height="32.6" fill="#424242"/>
<text x="746" y="859.46" font-size="19.4" fill="#f2f2f2" font-weight="bold" textLength="17" lengthAdjust="spacingAndGlyphs">Y</text>
<text x="954" y="859.46" font-size="19.6" fill="#f2f2f2" textLength="106.8" lengthAdjust="spacingAndGlyphs">243,6832</text>
<text x="1075.35" y="859.46" font-size="19.6" fill="#f2f2f2" textLength="106.8" lengthAdjust="spacingAndGlyphs">238,7098</text>
<text x="1196.7" y="859.46" font-size="19.6" fill="#f2f2f2" textLength="106.8" lengthAdjust="spacingAndGlyphs">235,2650</text>
<text x="1318.05" y="859.46" font-size="19.6" fill="#f2f2f2" textLength="106.8" lengthAdjust="spacingAndGlyphs">232,4148</text>
<text x="1439.4" y="859.46" font-size="19.6" fill="#f2f2f2" textLength="106.8" lengthAdjust="spacingAndGlyphs">229,8520</text>
<rect x="725.4" y="867.49" width="827.9" height="32.6" fill="#808080"/>
<text x="746" y="891.79" font-size="19.4" fill="#e4e4e4" font-weight="bold" textLength="178.5" lengthAdjust="spacingAndGlyphs">Target x:CIE31</text>
<text x="954" y="891.79" font-size="19.6" fill="#e4e4e4" textLength="78" lengthAdjust="spacingAndGlyphs">0,3344</text>
<text x="1075.35" y="891.79" font-size="19.6" fill="#e4e4e4" textLength="78" lengthAdjust="spacingAndGlyphs">0,3564</text>
<text x="1196.7" y="891.79" font-size="19.6" fill="#e4e4e4" textLength="78" lengthAdjust="spacingAndGlyphs">0,3773</text>
<text x="1318.05" y="891.79" font-size="19.6" fill="#e4e4e4" textLength="78" lengthAdjust="spacingAndGlyphs">0,3969</text>
<text x="1439.4" y="891.79" font-size="19.6" fill="#e4e4e4" textLength="78" lengthAdjust="spacingAndGlyphs">0,4193</text>
<rect x="725.4" y="899.82" width="827.9" height="32.6" fill="#424242"/>
<text x="746" y="924.12" font-size="19.4" fill="#f2f2f2" font-weight="bold" textLength="178.5" lengthAdjust="spacingAndGlyphs">Target y:CIE31</text>
<text x="954" y="924.12" font-size="19.6" fill="#f2f2f2" textLength="78" lengthAdjust="spacingAndGlyphs">0,3648</text>
<text x="1075.35" y="924.12" font-size="19.6" fill="#f2f2f2" textLength="78" lengthAdjust="spacingAndGlyphs">0,4013</text>
<text x="1196.7" y="924.12" font-size="19.6" fill="#f2f2f2" textLength="78" lengthAdjust="spacingAndGlyphs">0,4358</text>
<text x="1318.05" y="924.12" font-size="19.6" fill="#f2f2f2" textLength="78" lengthAdjust="spacingAndGlyphs">0,4682</text>
<text x="1439.4" y="924.12" font-size="19.6" fill="#f2f2f2" textLength="78" lengthAdjust="spacingAndGlyphs">0,5053</text>
<rect x="725.4" y="932.15" width="827.9" height="32.45" fill="#808080"/>
<text x="746" y="956.45" font-size="19.4" fill="#e4e4e4" font-weight="bold" textLength="104" lengthAdjust="spacingAndGlyphs">Target Y</text>
<text x="954" y="956.45" font-size="19.6" fill="#e4e4e4" textLength="106.8" lengthAdjust="spacingAndGlyphs">225,8992</text>
<text x="1075.35" y="956.45" font-size="19.6" fill="#e4e4e4" textLength="106.8" lengthAdjust="spacingAndGlyphs">221,9340</text>
<text x="1196.7" y="956.45" font-size="19.6" fill="#e4e4e4" textLength="106.8" lengthAdjust="spacingAndGlyphs">218,8873</text>
<text x="1318.05" y="956.45" font-size="19.6" fill="#e4e4e4" textLength="106.8" lengthAdjust="spacingAndGlyphs">216,4962</text>
<text x="1439.4" y="956.45" font-size="19.6" fill="#e4e4e4" textLength="106.8" lengthAdjust="spacingAndGlyphs">214,1846</text>
<rect x="0" y="996.8" width="1920" height="48" fill="url(#gst)"/>
<rect x="1" y="997.3" width="33.5" height="50" rx="3" fill="url(#gsb)"/>
<circle cx="17.6" cy="1004.2" r="6" fill="url(#gcir2)"/><path d="M14.4 1006l3.2-3.6 3.2 3.6z" fill="#222"/>
<rect x="4.7" y="1017.3" width="26.4" height="22.3" rx="3" fill="#ff0"/>
<rect x="39.2" y="997.3" width="112.2" height="50" rx="3" fill="url(#gsb)"/>
<rect x="43.4" y="1001.6" width="104.6" height="26.6" rx="3" fill="#c0c0a3" stroke="#8a8a7a" stroke-width="1"/>
<text x="95.4" y="1040.3" font-size="7.8" fill="#2a2a2a" text-anchor="middle" font-weight="bold" textLength="15.5" lengthAdjust="spacingAndGlyphs">20%</text>
<rect x="153.15" y="997.3" width="112.2" height="50" rx="3" fill="url(#gsb)"/>
<rect x="157.35" y="1001.6" width="104.6" height="26.6" rx="3" fill="#c0be86" stroke="#8a8a7a" stroke-width="1"/>
<text x="209.35" y="1040.3" font-size="7.8" fill="#2a2a2a" text-anchor="middle" font-weight="bold" textLength="15.5" lengthAdjust="spacingAndGlyphs">40%</text>
<rect x="267.1" y="997.3" width="112.2" height="50" rx="3" fill="url(#gsb)"/>
<rect x="271.3" y="1001.6" width="104.6" height="26.6" rx="3" fill="#bfbe6a" stroke="#8a8a7a" stroke-width="1"/>
<text x="323.3" y="1040.3" font-size="7.8" fill="#2a2a2a" text-anchor="middle" font-weight="bold" textLength="15.5" lengthAdjust="spacingAndGlyphs">60%</text>
<rect x="381.05" y="997.3" width="112.2" height="50" rx="3" fill="url(#gsb)"/>
<rect x="385.25" y="1001.6" width="104.6" height="26.6" rx="3" fill="#bebe4e" stroke="#8a8a7a" stroke-width="1"/>
<text x="437.25" y="1040.3" font-size="7.8" fill="#2a2a2a" text-anchor="middle" font-weight="bold" textLength="15.5" lengthAdjust="spacingAndGlyphs">80%</text>
<rect x="495" y="997.3" width="112.2" height="44.6" rx="3" fill="url(#gsd)"/>
<rect x="499.2" y="1001.6" width="104.6" height="26.6" rx="3" fill="#c4c400" stroke="#2a2a2a" stroke-width="1"/>
<text x="551.2" y="1040.3" font-size="7.8" fill="#fff" text-anchor="middle" font-weight="bold" textLength="20" lengthAdjust="spacingAndGlyphs">100%</text>
<rect x="1678.2" y="997.3" width="35.5" height="13.6" rx="2.5" fill="url(#gsb2)"/>
<rect x="1678.2" y="1011.6" width="35.5" height="36" rx="2.5" fill="url(#gsb2)"/>
<circle cx="1696" cy="1003.9" r="5.6" fill="url(#gcir2)"/><path d="M1692.8 1005.7l3.2-3.6 3.2 3.6z" fill="#222"/>
<rect x="1684.8" y="1016.5" width="21.6" height="21.6" rx="3.5" fill="url(#gstop)" stroke="#1c1c1c" stroke-width="1.6"/>
<rect x="1690.7" y="1022.7" width="10.3" height="9.9" fill="#000"/>
<rect x="1715.1" y="997.3" width="33.5" height="22" rx="2" fill="url(#gsb2)"/>
<circle cx="1731.85" cy="1008.6" r="7.3" fill="url(#gcir2)"/>
<rect x="1729.05" y="1006" width="5.6" height="5.6" fill="#2a2a2a"/>
<rect x="1749.4" y="997.3" width="32.8" height="22" rx="2" fill="url(#gsb2)"/>
<circle cx="1765.8" cy="1008.6" r="7.3" fill="url(#gcir2)"/>
<path d="M1763.4 1005v7.6l6-3.8z" fill="#2a2a2a"/>
<rect x="1783" y="997.3" width="33.1" height="22" rx="2" fill="url(#gsb2)"/>
<circle cx="1799.55" cy="1008.6" r="7.3" fill="url(#gcir2)"/>
<path d="M1797.35 1005.4h-1.8v7h1.8M1801.75 1005.4h1.8v7h-1.8M1797.85 1009h3.4" stroke="#2a2a2a" stroke-width="1.1" fill="none"/>
<rect x="1816.9" y="997.3" width="33" height="22" rx="2" fill="url(#gsb2)"/>
<circle cx="1833.4" cy="1008.6" r="7.3" fill="url(#gcir2)"/>
<text x="1833.4" y="1012.6" font-size="13.5" fill="#2a2a2a" text-anchor="middle" font-weight="bold">∞</text>
<rect x="1850.7" y="997.3" width="32.9" height="22" rx="2" fill="url(#gsb2)"/>
<circle cx="1867.15" cy="1008.6" r="7.3" fill="url(#gcir2)"/>
<path d="M1863.65 1008.2a3.6 3.6 0 0 1 6.4-1.6M1870.65 1009.4a3.6 3.6 0 0 1-6.4 1.6" stroke="#2a2a2a" stroke-width="1.5" fill="none"/><path d="M1871.15 1004.6v3h-3zM1863.15 1013v-3h3z" fill="#2a2a2a"/>
<rect x="1884.4" y="997.3" width="36" height="22" fill="url(#gsd)"/>
<circle cx="1901.6" cy="1008.7" r="7.6" fill="#2a2a2a"/>
<rect x="1715.1" y="1020.2" width="101" height="27" rx="2" fill="url(#gsb2)"/>
<rect x="1816.9" y="1020.2" width="101.3" height="27" rx="2" fill="url(#gsb2)"/>
<circle cx="1737.6" cy="1032" r="6.8" fill="url(#gcir2)"/>
<circle cx="1897.6" cy="1032" r="6.8" fill="url(#gcir2)"/>
<text x="1737.4" y="1036.2" font-size="14" fill="#2e2e2e" text-anchor="middle" font-weight="bold">«</text>
<text x="1897.6" y="1036.2" font-size="14" fill="#2e2e2e" text-anchor="middle" font-weight="bold">»</text>
<text x="1757.3" y="1037.9" font-size="15.6" fill="#2c2c2c" textLength="38.5" lengthAdjust="spacingAndGlyphs" stroke="#2c2c2c" stroke-width=".6">Back</text>
<text x="1837.2" y="1037.9" font-size="15.6" fill="#2c2c2c" textLength="40" lengthAdjust="spacingAndGlyphs" stroke="#2c2c2c" stroke-width=".6">Next</text>
</svg>
<div class="g" style="left:1160px;top:118px;width:740px;height:558px;clip-path:polygon(152.86px 556.16px,152.71px 556.21px,152.49px 556.27px,152.16px 556.3px,151.65px 556.26px,151.03px 556.19px,150.49px 556.1px,150.12px 555.97px,149.84px 555.81px,149.52px 555.63px,149.15px 555.42px,148.75px 555.18px,148.29px 554.89px,147.76px 554.56px,147.18px 554.18px,146.54px 553.76px,145.87px 553.29px,145.14px 552.78px,144.34px 552.22px,143.47px 551.63px,142.52px 551px,141.45px 550.29px,140.24px 549.5px,138.92px 548.63px,137.49px 547.69px,135.97px 546.68px,134.34px 545.59px,132.58px 544.35px,130.67px 542.97px,128.62px 541.44px,126.43px 539.68px,124.14px 537.75px,121.69px 535.6px,118.97px 532.87px,115.92px 529.54px,112.59px 525.64px,108.96px 520.92px,105.04px 515.43px,100.82px 509.12px,96.23px 501.56px,91.26px 492.73px,85.92px 482.65px,80.16px 470.92px,73.85px 457.54px,67.12px 442.51px,60.32px 425.53px,53.5px 406.43px,46.61px 385.38px,39.86px 362.59px,33.15px 337.75px,26.57px 311.19px,20.63px 284.02px,15.37px 256.22px,10.75px 227.82px,7.2px 200.12px,4.76px 173.24px,3.39px 147.05px,3.42px 122.42px,4.93px 99.33px,7.84px 77.79px,12.2px 58.74px,18.21px 42.34px,25.67px 28.43px,34.15px 17.49px,43.69px 9.93px,54.24px 5.35px,65.24px 2.94px,76.6px 2.86px,88.4px 4.97px,100.27px 8.01px,112.16px 11.8px,124.1px 16.53px,135.83px 21.56px,147.2px 26.7px,158.36px 32.13px,169.37px 37.78px,180.22px 43.64px,190.93px 49.72px,201.59px 56px,212.23px 62.5px,222.82px 69.19px,233.37px 76.03px,243.88px 83.02px,254.35px 90.15px,264.8px 97.39px,275.26px 104.73px,285.7px 112.17px,296.15px 119.68px,306.63px 127.28px,317.11px 134.94px,327.58px 142.65px,338.02px 150.39px,348.44px 158.16px,358.84px 165.94px,369.23px 173.72px,379.61px 181.49px,389.92px 189.24px,400.15px 196.96px,410.32px 204.64px,420.39px 212.27px,430.36px 219.82px,440.24px 227.31px,449.97px 234.69px,459.58px 241.98px,469.05px 249.16px,478.33px 256.19px,487.44px 263.07px,496.37px 269.8px,505.03px 276.35px,513.43px 282.72px,521.56px 288.92px,529.35px 294.84px,536.73px 300.43px,543.76px 305.75px,550.51px 310.86px,557.02px 315.79px,563.24px 320.5px,569.12px 324.94px,574.61px 329.07px,579.75px 332.93px,584.57px 336.55px,589.07px 339.96px,593.24px 343.14px,597.13px 346.1px,600.73px 348.84px,604.04px 351.36px,607.14px 353.71px,610.01px 355.87px,612.66px 357.86px,615.13px 359.72px,617.42px 361.46px,619.54px 363.07px,621.54px 364.59px,623.44px 366.03px,625.22px 367.39px,626.89px 368.66px,628.46px 369.86px,629.92px 370.97px,631.28px 372px,632.55px 372.94px,633.72px 373.81px,634.79px 374.6px,635.76px 375.33px,636.63px 375.99px,637.43px 376.61px,638.17px 377.17px,638.84px 377.68px,639.45px 378.14px,639.93px 378.51px,640.35px 378.83px,640.94px 379.27px,641.89px 380px,643.01px 380.85px,643.93px 381.54px,644.48px 381.97px,644.84px 382.24px,645.07px 382.41px,645.15px 382.48px,645.11px 382.44px,645.07px 382.41px)"><i style="background:linear-gradient(90deg,#009946 -1162px,#009946 -1157px)"></i><i style="background:linear-gradient(90deg,#090 58px,#090 85px)"></i><i style="background:linear-gradient(90deg,#090 50px,#090 95px)"></i><i style="background:linear-gradient(90deg,#090 46px,#090 103px)"></i><i style="background:linear-gradient(90deg,#090 41px,#090 109px)"></i><i style="background:linear-gradient(90deg,#090 39px,#090 115px)"></i><i style="background:linear-gradient(90deg,#090 36px,#090 120px)"></i><i style="background:linear-gradient(90deg,#090 34px,#090 125px)"></i><i style="background:linear-gradient(90deg,#090 31px,#090 130px)"></i><i style="background:linear-gradient(90deg,#090 30px,#090 135px)"></i><i style="background:linear-gradient(90deg,#009901 28px,#090 139px)"></i><i style="background:linear-gradient(90deg,#009901 27px,#090 144px)"></i><i style="background:linear-gradient(90deg,#009902 25px,#090 148px)"></i><i style="background:linear-gradient(90deg,#009902 24px,#090 152px)"></i><i style="background:linear-gradient(90deg,#009903 22px,#090 113px,#090 156px)"></i><i style="background:linear-gradient(90deg,#009904 21px,#090 100px,#090 161px)"></i><i style="background:linear-gradient(90deg,#009904 20px,#090 94px,#090 165px)"></i><i style="background:linear-gradient(90deg,#009905 19px,#090 92px,#090 168px)"></i><i style="background:linear-gradient(90deg,#009905 18px,#090 93px,#090 172px)"></i><i style="background:linear-gradient(90deg,#009906 17px,#090 94px,#090 176px)"></i><i style="background:linear-gradient(90deg,#009906 16px,#090 96px,#090 180px)"></i><i style="background:linear-gradient(90deg,#009907 15px,#090 98px,#090 183px)"></i><i style="background:linear-gradient(90deg,#009907 14px,#090 100px,#090 187px)"></i><i style="background:linear-gradient(90deg,#009908 14px,#090 103px,#090 190px)"></i><i style="background:linear-gradient(90deg,#009908 13px,#090 105px,#090 194px)"></i><i style="background:linear-gradient(90deg,#009909 12px,#090 108px,#090 197px)"></i><i style="background:linear-gradient(90deg,#009909 11px,#090 111px,#090 201px)"></i><i style="background:linear-gradient(90deg,#00990a 11px,#090 114px,#090 204px)"></i><i style="background:linear-gradient(90deg,#00990a 10px,#090 117px,#090 207px)"></i><i style="background:linear-gradient(90deg,#00990b 9px,#090 120px,#090 211px)"></i><i style="background:linear-gradient(90deg,#00990b 9px,#090 122px,#090 214px)"></i><i style="background:linear-gradient(90deg,#00990c 8px,#090 126px,#090 217px)"></i><i style="background:linear-gradient(90deg,#00990d 8px,#090 129px,#090 220px)"></i><i style="background:linear-gradient(90deg,#00990d 8px,#090 132px,#090 223px)"></i><i style="background:linear-gradient(90deg,#00990e 7px,#090 135px,#090 227px)"></i><i style="background:linear-gradient(90deg,#00990e 7px,#090 138px,#090 230px)"></i><i style="background:linear-gradient(90deg,#00990f 6px,#090 141px,#090 233px)"></i><i style="background:linear-gradient(90deg,#00990f 6px,#090 144px,#090 236px)"></i><i style="background:linear-gradient(90deg,#009910 5px,#090 147px,#090 239px)"></i><i style="background:linear-gradient(90deg,#009910 5px,#090 150px,#090 242px)"></i><i style="background:linear-gradient(90deg,#091 5px,#090 153px,#090 245px)"></i><i style="background:linear-gradient(90deg,#091 4px,#090 157px,#090 248px)"></i><i style="background:linear-gradient(90deg,#009912 4px,#090 160px,#090 251px)"></i><i style="background:linear-gradient(90deg,#009912 4px,#090 163px,#090 254px)"></i><i style="background:linear-gradient(90deg,#009913 4px,#090 166px,#090 257px)"></i><i style="background:linear-gradient(90deg,#009913 3px,#090 169px,#090 260px)"></i><i style="background:linear-gradient(90deg,#009914 3px,#090 172px,#090 262px)"></i><i style="background:linear-gradient(90deg,#009914 3px,#090 176px,#090 265px)"></i><i style="background:linear-gradient(90deg,#009915 3px,#090 179px,#090 268px)"></i><i style="background:linear-gradient(90deg,#009916 2px,#090 182px,#090 271px)"></i><i style="background:linear-gradient(90deg,#009916 2px,#090 185px,#090 274px)"></i><i style="background:linear-gradient(90deg,#009917 2px,#090 188px,#090 277px)"></i><i style="background:linear-gradient(90deg,#009917 2px,#090 191px,#090 280px)"></i><i style="background:linear-gradient(90deg,#009918 2px,#090 195px,#090 282px)"></i><i style="background:linear-gradient(90deg,#009918 2px,#090 198px,#029900 285px)"></i><i style="background:linear-gradient(90deg,#009919 2px,#090 201px,#029900 284px,#059900 288px)"></i><i style="background:linear-gradient(90deg,#00991a 1px,#090 204px,#029900 283px,#089900 291px)"></i><i style="background:linear-gradient(90deg,#00991a 1px,#090 208px,#029900 282px,#0a9900 294px)"></i><i style="background:linear-gradient(90deg,#00991b 1px,#090 211px,#029900 282px,#0c9900 296px)"></i><i style="background:linear-gradient(90deg,#00991b 1px,#090 214px,#029900 281px,#0f9900 299px)"></i><i style="background:linear-gradient(90deg,#00991c 1px,#090 217px,#029900 280px,#129900 302px)"></i><i style="background:linear-gradient(90deg,#00991d 1px,#090 220px,#029900 279px,#159900 305px)"></i><i style="background:linear-gradient(90deg,#00991d 1px,#090 223px,#029900 279px,#179900 307px)"></i><i style="background:linear-gradient(90deg,#00991e 1px,#090 227px,#029900 278px,#1a9900 310px)"></i><i style="background:linear-gradient(90deg,#00991e 1px,#090 230px,#029900 277px,#1d9900 313px)"></i><i style="background:linear-gradient(90deg,#00991f 1px,#090 233px,#029900 276px,#209900 316px)"></i><i style="background:linear-gradient(90deg,#009920 1px,#090 236px,#029900 276px,#239900 318px)"></i><i style="background:linear-gradient(90deg,#009920 1px,#090 240px,#029900 275px,#269900 321px)"></i><i style="background:linear-gradient(90deg,#009921 1px,#090 243px,#029900 274px,#299900 324px)"></i><i style="background:linear-gradient(90deg,#009921 1px,#090 246px,#029900 274px,#2c9900 326px)"></i><i style="background:linear-gradient(90deg,#092 1px,#090 249px,#029900 273px,#2f9900 329px)"></i><i style="background:linear-gradient(90deg,#009923 1px,#009901 234px,#029900 272px,#390 332px)"></i><i style="background:linear-gradient(90deg,#009923 1px,#009901 233px,#029900 271px,#369900 335px)"></i><i style="background:linear-gradient(90deg,#009924 1px,#009902 233px,#029900 271px,#399900 337px)"></i><i style="background:linear-gradient(90deg,#009925 1px,#009903 232px,#029900 270px,#3d9900 340px)"></i><i style="background:linear-gradient(90deg,#009925 1px,#009904 232px,#029900 269px,#419900 343px)"></i><i style="background:linear-gradient(90deg,#009926 1px,#009904 231px,#029900 268px,#490 345px)"></i><i style="background:linear-gradient(90deg,#009927 1px,#009905 231px,#029900 268px,#489900 348px)"></i><i style="background:linear-gradient(90deg,#009927 1px,#009906 230px,#029900 267px,#4b9900 350px,#4c9900 351px)"></i><i style="background:linear-gradient(90deg,#009928 1px,#009907 230px,#029900 266px,#4a9900 348px,#4f9900 353px)"></i><i style="background:linear-gradient(90deg,#009929 2px,#009907 230px,#029900 265px,#4b9900 347px,#549900 356px)"></i><i style="background:linear-gradient(90deg,#009929 2px,#009908 229px,#029901 265px,#4b9900 346px,#589900 359px)"></i><i style="background:linear-gradient(90deg,#00992a 2px,#009909 229px,#029902 264px,#4b9900 345px,#5c9900 361px)"></i><i style="background:linear-gradient(90deg,#00992b 2px,#00990a 228px,#029903 263px,#349900 320px,#609900 364px)"></i><i style="background:linear-gradient(90deg,#00992c 2px,#00990b 228px,#029904 262px,#259900 303px,#659900 367px)"></i><i style="background:linear-gradient(90deg,#00992c 2px,#00990c 227px,#029905 261px,#259900 302px,#699900 369px)"></i><i style="background:linear-gradient(90deg,#00992d 2px,#00990c 227px,#029906 261px,#289900 304px,#6e9900 372px)"></i><i style="background:linear-gradient(90deg,#00992e 2px,#00990d 226px,#029907 260px,#299900 305px,#739900 375px)"></i><i style="background:linear-gradient(90deg,#00992e 3px,#00990e 227px,#029908 259px,#2c9900 307px,#790 377px)"></i><i style="background:linear-gradient(90deg,#00992f 3px,#00990f 226px,#029908 259px,#309900 310px,#7b9900 379px,#7c9900 380px)"></i><i style="background:linear-gradient(90deg,#009930 3px,#009910 226px,#029909 258px,#349900 313px,#7f9900 381px,#829900 383px)"></i><i style="background:linear-gradient(90deg,#009931 3px,#091 225px,#02990a 257px,#379900 315px,#829900 382px,#869900 385px)"></i><i style="background:linear-gradient(90deg,#009932 3px,#009912 225px,#02990b 256px,#3b9900 318px,#879900 384px,#8c9900 388px)"></i><i style="background:linear-gradient(90deg,#009932 3px,#009913 224px,#02990c 256px,#409900 321px,#8b9900 386px,#929900 391px)"></i><i style="background:linear-gradient(90deg,#093 4px,#009913 225px,#02990d 255px,#490 324px,#909900 388px,#979900 393px)"></i><i style="background:linear-gradient(90deg,#009934 4px,#009914 224px,#02990e 254px,#489900 327px,#959900 390px,#999500 396px)"></i><i style="background:linear-gradient(90deg,#009935 4px,#009915 224px,#02990f 253px,#4a9900 327px,#969900 389px,#999200 397px,#998f00 399px)"></i><i style="background:linear-gradient(90deg,#009936 4px,#009916 223px,#029910 253px,#4b9900 327px,#999700 391px,#998b00 401px)"></i><i style="background:linear-gradient(90deg,#009936 4px,#009917 223px,#029911 252px,#4a9900 325px,#979900 387px,#998500 404px)"></i><i style="background:linear-gradient(90deg,#009937 5px,#009918 223px,#029912 251px,#4a9902 324px,#979900 385px,#998000 407px)"></i><i style="background:linear-gradient(90deg,#009938 5px,#009919 223px,#029914 250px,#4b9903 323px,#929900 380px,#999600 387px,#997c00 409px)"></i><i style="background:linear-gradient(90deg,#009939 5px,#00991a 222px,#029915 250px,#4b9904 322px,#749900 356px,#999700 385px,#970 412px)"></i><i style="background:linear-gradient(90deg,#00993a 5px,#00991b 222px,#029916 249px,#4b9905 321px,#739900 354px,#999700 383px,#997300 415px)"></i><i style="background:linear-gradient(90deg,#00993b 5px,#00991c 222px,#029917 248px,#4a9906 319px,#769900 355px,#999800 381px,#997100 415px,#996f00 417px)"></i><i style="background:linear-gradient(90deg,#00993b 6px,#00991d 222px,#029918 247px,#4a9908 318px,#7b9900 357px,#999700 380px,#997000 414px,#996b00 420px)"></i><i style="background:linear-gradient(90deg,#00993c 6px,#00991e 222px,#029919 247px,#4b9909 317px,#819900 360px,#999800 378px,#997100 411px,#996700 423px)"></i><i style="background:linear-gradient(90deg,#00993d 6px,#00991f 221px,#02991a 246px,#4b990a 316px,#879900 363px,#999700 377px,#997100 410px,#996400 425px)"></i><i style="background:linear-gradient(90deg,#00993e 6px,#009920 221px,#02991b 245px,#4a990c 314px,#8c9900 365px,#999700 375px,#997100 408px,#996000 428px)"></i><i style="background:linear-gradient(90deg,#00993f 7px,#009921 221px,#02991d 244px,#4a990d 313px,#949900 369px,#999500 375px,#996f00 408px,#995d00 430px)"></i><i style="background:linear-gradient(90deg,#009940 7px,#092 221px,#02991e 244px,#4a990e 312px,#969900 369px,#998b00 381px,#960 417px,#995a00 433px)"></i><i style="background:linear-gradient(90deg,#009941 7px,#009923 221px,#02991f 243px,#4b9910 311px,#979900 368px,#996d00 407px,#995600 436px)"></i><i style="background:linear-gradient(90deg,#009942 8px,#009924 221px,#029920 242px,#4a9911 309px,#979901 366px,#997a00 392px,#995600 434px,#995400 438px)"></i><i style="background:linear-gradient(90deg,#009943 8px,#009925 221px,#029922 241px,#4a9913 308px,#969903 364px,#999201 371px,#996b00 405px,#995100 441px)"></i><i style="background:linear-gradient(90deg,#094 8px,#009927 221px,#029923 241px,#4a9914 307px,#979904 363px,#997800 390px,#950 432px,#994e00 444px)"></i><i style="background:linear-gradient(90deg,#009945 8px,#009928 221px,#029924 240px,#4a9915 306px,#969906 361px,#998e03 370px,#996900 404px,#994b00 446px)"></i><i style="background:linear-gradient(90deg,#009946 9px,#009929 221px,#029925 239px,#4b9917 305px,#979907 360px,#997200 392px,#995000 436px,#994800 449px)"></i><i style="background:linear-gradient(90deg,#009947 9px,#00992a 221px,#039927 239px,#4b9918 304px,#999708 361px,#997100 392px,#994e00 437px,#994600 452px)"></i><i style="background:linear-gradient(90deg,#009948 9px,#00992b 221px,#029928 238px,#4b991a 303px,#97990b 357px,#996e00 393px,#994c00 439px,#940 454px)"></i><i style="background:linear-gradient(90deg,#009949 10px,#00992c 221px,#029929 237px,#4a991b 301px,#97990d 355px,#996c00 393px,#994a00 439px,#994100 457px)"></i><i style="background:linear-gradient(90deg,#00994a 10px,#00992e 221px,#02992b 236px,#4a991d 300px,#96990f 353px,#99910c 360px,#996b01 392px,#994a00 438px,#993f00 459px)"></i><i style="background:linear-gradient(90deg,#00994b 10px,#00992f 221px,#03992c 236px,#4b991f 299px,#979910 352px,#996c03 389px,#994b00 434px,#993d00 462px)"></i><i style="background:linear-gradient(90deg,#00994c 11px,#009930 222px,#02992e 235px,#4b9920 298px,#999711 353px,#997005 383px,#950 416px,#993a00 465px)"></i><i style="background:linear-gradient(90deg,#00994d 11px,#009932 221px,#02992f 234px,#4a9922 296px,#969914 348px,#999311 354px,#996d06 385px,#995100 419px,#993800 467px)"></i><i style="background:linear-gradient(90deg,#00994e 11px,#093 221px,#039930 234px,#4b9923 296px,#999815 349px,#997209 378px,#995000 419px,#993600 470px)"></i><i style="background:linear-gradient(90deg,#00994f 12px,#009934 222px,#039932 233px,#4a9925 294px,#999716 348px,#99710a 377px,#994f00 419px,#993400 473px)"></i><i style="background:linear-gradient(90deg,#009950 12px,#009935 222px,#029934 232px,#4b9927 293px,#979919 344px,#996c0a 380px,#994a00 424px,#993200 475px)"></i><i style="background:linear-gradient(90deg,#009952 12px,#009937 222px,#039935 232px,#4b9928 292px,#99971a 345px,#99700d 374px,#994e01 416px,#993000 478px)"></i><i style="background:linear-gradient(90deg,#009953 13px,#009938 223px,#049936 232px,#4d992a 292px,#99971c 343px,#99710e 372px,#994e02 413px,#993000 475px,#992e00 481px)"></i><i style="background:linear-gradient(90deg,#009954 13px,#009939 223px,#049938 231px,#4b992c 290px,#99981f 341px,#997210 369px,#995004 409px,#993a00 449px,#992d00 483px)"></i><i style="background:linear-gradient(90deg,#095 13px,#00993b 223px,#049939 231px,#4d992d 290px,#999720 340px,#997112 368px,#994f05 408px,#993a00 447px,#992b00 486px)"></i><i style="background:linear-gradient(90deg,#009956 14px,#00993c 224px,#1b9937 250px,#65992c 305px,#999823 338px,#997113 366px,#994f06 406px,#993900 447px,#992900 489px)"></i><i style="background:linear-gradient(90deg,#009958 14px,#00993e 224px,#379935 271px,#829929 322px,#999724 337px,#997015 365px,#994e07 405px,#993600 450px,#992700 491px)"></i><i style="background:linear-gradient(90deg,#009959 14px,#00993f 224px,#409935 277px,#8d9929 327px,#999827 335px,#997217 362px,#994f09 401px,#993500 451px,#992600 494px)"></i><i style="background:linear-gradient(90deg,#00995a 15px,#019941 225px,#499936 282px,#94992a 330px,#999528 335px,#996e17 363px,#994d09 403px,#993200 455px,#992400 496px)"></i><i style="background:linear-gradient(90deg,#00995b 15px,#029942 225px,#4a9937 282px,#97992c 330px,#996e19 362px,#994c0a 402px,#993000 457px,#992300 499px)"></i><i style="background:linear-gradient(90deg,#00995d 15px,#029944 224px,#49993a 280px,#95992e 327px,#99932b 333px,#996d1a 361px,#994b0b 401px,#992e00 460px,#992100 502px)"></i><i style="background:linear-gradient(90deg,#00995e 16px,#019946 223px,#49993c 279px,#969931 326px,#99922d 332px,#996c1b 360px,#994a0c 400px,#992d00 461px,#992000 504px)"></i><i style="background:linear-gradient(90deg,#00995f 16px,#019948 222px,#4a993e 278px,#979933 325px,#996c1d 358px,#994a0d 398px,#992d00 459px,#991e00 507px)"></i><i style="background:linear-gradient(90deg,#009961 17px,#029949 222px,#4a9940 277px,#969935 323px,#998f30 330px,#996a1e 358px,#99480e 399px,#992b00 461px,#991d00 510px)"></i><i style="background:linear-gradient(90deg,#009962 17px,#02994b 221px,#4a9942 276px,#979937 322px,#996d22 353px,#994b11 392px,#992e02 451px,#991b00 512px)"></i><i style="background:linear-gradient(90deg,#009963 17px,#01994d 220px,#499944 274px,#96993a 320px,#998831 331px,#99641f 360px,#99430e 403px,#992600 469px,#991a00 515px)"></i><i style="background:linear-gradient(90deg,#009965 18px,#01994f 219px,#499946 273px,#96993c 318px,#999339 323px,#996e26 349px,#994c14 387px,#992e05 444px,#991f00 492px,#991900 518px)"></i><i style="background:linear-gradient(90deg,#096 18px,#029951 219px,#4a9948 272px,#97993f 317px,#99732a 343px,#995018 379px,#993207 433px,#991f00 488px,#991700 520px)"></i><i style="background:linear-gradient(90deg,#009968 19px,#029953 218px,#4a994b 271px,#969941 315px,#99913d 321px,#996b28 348px,#994915 387px,#992b05 446px,#991c00 497px,#991600 523px)"></i><i style="background:linear-gradient(90deg,#009969 19px,#019955 217px,#49994d 269px,#959944 313px,#999542 317px,#996f2c 342px,#994e19 378px,#992f09 433px,#991c00 494px,#991500 525px)"></i><i style="background:linear-gradient(90deg,#00996b 19px,#019957 216px,#49994f 268px,#969947 312px,#998d3f 320px,#99682a 347px,#994617 386px,#992906 446px,#991a00 500px,#991400 528px)"></i><i style="background:linear-gradient(90deg,#00996c 20px,#029959 216px,#499952 267px,#959949 310px,#999547 314px,#996f30 339px,#994d1c 375px,#992f0b 429px,#991900 499px,#991200 531px)"></i><i style="background:linear-gradient(90deg,#00996e 20px,#02995c 215px,#4a9954 266px,#96994c 309px,#99843f 322px,#995f29 351px,#993f16 393px,#992305 458px,#991600 512px,#910 533px)"></i><i style="background:linear-gradient(90deg,#00996f 21px,#01995e 214px,#4a9957 265px,#96994f 307px,#99934a 312px,#996d33 337px,#994b1e 373px,#992d0c 428px,#991600 505px,#991000 536px)"></i><i style="background:linear-gradient(90deg,#009971 21px,#019960 213px,#499959 263px,#959952 305px,#99954f 309px,#996f37 333px,#994d21 368px,#992f0f 421px,#991500 506px,#990f00 539px)"></i><i style="background:linear-gradient(90deg,#009972 22px,#029962 213px,#4b995c 263px,#999854 306px,#99723b 329px,#995025 362px,#993212 412px,#991801 492px,#990e00 541px)"></i><i style="background:linear-gradient(90deg,#009974 22px,#029965 212px,#49995e 261px,#959957 302px,#999554 306px,#996e3b 330px,#994d25 364px,#992f11 416px,#991500 500px,#990d00 544px)"></i><i style="background:linear-gradient(90deg,#009976 22px,#019967 211px,#4a9961 260px,#96995a 301px,#998a50 310px,#996537 336px,#994421 374px,#99270e 432px,#910 518px,#990c00 547px)"></i><i style="background:linear-gradient(90deg,#009978 23px,#029969 211px,#4a9964 259px,#95995d 299px,#99945a 303px,#996f40 326px,#994d28 360px,#992f14 411px,#991502 493px,#990b00 549px)"></i><i style="background:linear-gradient(90deg,#009979 23px,#02996c 210px,#4a9966 258px,#979960 298px,#99794a 317px,#995631 347px,#99371b 392px,#991c08 463px,#990d00 531px,#990a00 552px)"></i><i style="background:linear-gradient(90deg,#00997b 24px,#02996e 209px,#499969 256px,#969964 296px,#99925e 301px,#996b43 325px,#994a2a 359px,#992c15 411px,#991303 495px,#990900 555px)"></i><i style="background:linear-gradient(90deg,#00997d 24px,#019971 208px,#49996c 255px,#959967 294px,#999563 298px,#996e47 321px,#994c2e 354px,#992e18 404px,#991505 485px,#990a00 545px,#990800 557px)"></i><i style="background:linear-gradient(90deg,#00997f 25px,#029974 208px,#4a996f 254px,#96996a 293px,#998d61 300px,#996845 324px,#99472c 359px,#992a16 412px,#991103 499px,#990700 560px)"></i><i style="background:linear-gradient(90deg,#009980 25px,#029976 207px,#4a9972 253px,#95996e 291px,#99946a 295px,#996f4d 317px,#994d32 349px,#992f1b 397px,#991608 475px,#990900 545px,#990600 562px)"></i><i style="background:linear-gradient(90deg,#009982 26px,#019979 206px,#4a9975 252px,#969971 290px,#998561 301px,#996145 326px,#99412b 363px,#992515 420px,#990d02 515px,#990500 565px)"></i><i style="background:linear-gradient(90deg,#009984 26px,#01997c 205px,#499978 250px,#959974 288px,#99926e 293px,#996c50 315px,#994b35 347px,#992d1d 396px,#991409 475px,#990700 551px,#990400 568px)"></i><i style="background:linear-gradient(90deg,#009986 27px,#02997e 205px,#4b997b 250px,#979978 287px,#996e54 312px,#994c38 343px,#992f20 390px,#99150b 466px,#990600 552px,#990300 570px)"></i><i style="background:linear-gradient(90deg,#098 27px,#029981 204px,#4a997f 248px,#96997c 285px,#998f73 291px,#996a54 313px,#994938 345px,#992c1f 394px,#99130a 474px,#990500 557px,#990300 573px)"></i><i style="background:linear-gradient(90deg,#00998a 28px,#019984 203px,#4a9982 247px,#99997f 285px,#99735e 305px,#995140 334px,#993226 378px,#991810 448px,#990500 553px,#990200 576px)"></i><i style="background:linear-gradient(90deg,#00998c 28px,#019987 202px,#489985 245px,#949983 281px,#99957f 285px,#996f5e 306px,#994d40 336px,#992f25 381px,#99160f 454px,#990300 558px,#990100 578px)"></i><i style="background:linear-gradient(90deg,#00998e 29px,#02998a 202px,#4b9989 245px,#999886 282px,#997263 302px,#994f44 331px,#993229 374px,#991812 443px,#990300 555px,#900 581px)"></i><i style="background:linear-gradient(90deg,#009991 29px,#02998d 201px,#49998c 243px,#94998b 278px,#999789 281px,#997166 301px,#994e46 330px,#99302a 374px,#991712 444px,#990200 558px,#900 584px)"></i><i style="background:linear-gradient(90deg,#009993 30px,#019991 200px,#4a9990 242px,#95998f 277px,#999187 282px,#996b63 303px,#994a44 333px,#992c28 379px,#991310 454px,#990100 565px,#900 586px)"></i><i style="background:linear-gradient(90deg,#009995 30px,#019994 199px,#489993 240px,#949993 275px,#999690 278px,#99706b 298px,#994d4a 327px,#99302d 370px,#991614 440px,#990100 560px,#900 589px)"></i><i style="background:linear-gradient(90deg,#009997 31px,#029997 199px,#4a9997 240px,#969997 274px,#998e8c 280px,#996967 301px,#994847 331px,#992b2a 377px,#991212 452px,#900 569px,#900 592px)"></i><i style="background:linear-gradient(90deg,#009899 31px,#029799 198px,#4a9799 239px,#959799 273px,#999193 277px,#996c6e 297px,#994a4c 326px,#992d2e 370px,#991415 441px,#900 561px,#900 594px)"></i><i style="background:linear-gradient(90deg,#009699 32px,#019499 197px,#4a9399 239px,#999298 275px,#996d73 294px,#994c50 322px,#992f32 364px,#991518 431px,#990102 548px,#900 597px)"></i><i style="background:linear-gradient(90deg,#009499 32px,#019199 196px,#499099 238px,#948e99 273px,#998c96 276px,#996870 296px,#99474e 325px,#992b30 369px,#991316 439px,#990002 554px,#900 599px)"></i><i style="background:linear-gradient(90deg,#009199 33px,#028e99 196px,#498c99 238px,#978a99 274px,#997684 285px,#99555f 309px,#99373f 344px,#991d23 399px,#99070c 491px,#990001 566px,#900 602px)"></i><i style="background:linear-gradient(90deg,#008f99 33px,#028b99 195px,#4a8899 238px,#968699 274px,#997384 285px,#995360 309px,#993640 344px,#991c24 399px,#99070c 491px,#990002 562px,#900 605px)"></i><i style="background:linear-gradient(90deg,#008d99 34px,#018799 194px,#498599 237px,#948399 273px,#997f95 277px,#995d6f 298px,#993f4d 328px,#992530 373px,#990e16 446px,#990004 547px,#900 607px)"></i><i style="background:linear-gradient(90deg,#008b99 34px,#028499 194px,#4b8299 238px,#997d98 276px,#995c71 297px,#993e4f 327px,#992431 372px,#990e17 444px,#990005 543px,#900 610px)"></i><i style="background:linear-gradient(90deg,#008999 35px,#028299 193px,#4a7e99 237px,#967b99 274px,#997491 279px,#99556c 301px,#99384a 333px,#991f2d 381px,#990a14 460px,#990005 542px,#900 613px)"></i><i style="background:linear-gradient(90deg,#008699 36px,#017f99 192px,#4a7b99 237px,#997798 276px,#995772 297px,#993b50 327px,#992232 372px,#990c18 444px,#990007 535px,#900 615px)"></i><i style="background:linear-gradient(90deg,#008499 36px,#017c99 191px,#497899 236px,#957499 274px,#997094 278px,#99516e 300px,#99354c 332px,#991d2e 380px,#990915 458px,#990007 533px,#900 618px)"></i><i style="background:linear-gradient(90deg,#008299 37px,#027999 191px,#4b7599 237px,#997099 276px,#995273 297px,#993751 327px,#991f33 372px,#990b19 444px,#990009 527px,#900 621px)"></i><i style="background:linear-gradient(90deg,#008099 37px,#027699 190px,#4a7299 236px,#976d99 275px,#994a6c 302px,#99304b 335px,#99192d 385px,#990614 466px,#990009 529px,#900 623px)"></i><i style="background:linear-gradient(90deg,#007e99 38px,#017499 189px,#4a6f99 236px,#976a99 275px,#995178 294px,#993656 323px,#991f36 367px,#990b1c 436px,#99000b 517px,#900 626px)"></i><i style="background:linear-gradient(90deg,#007c99 38px,#027199 189px,#4b6c99 236px,#966699 275px,#995988 285px,#993e62 311px,#992642 349px,#991125 407px,#99000d 504px,#900 626px,#900 629px)"></i><i style="background:linear-gradient(90deg,#007a99 39px,#026f99 188px,#496999 235px,#966399 275px,#99598c 283px,#993e66 308px,#992746 344px,#991229 399px,#990010 490px,#900 623px,#900 631px)"></i><i style="background:linear-gradient(90deg,#007899 40px,#016c99 187px,#4a6699 235px,#966099 275px,#995990 281px,#993f6b 305px,#992749 340px,#99132c 393px,#990113 480px,#900 621px,#900 634px)"></i><i style="background:linear-gradient(90deg,#007699 40px,#016a99 186px,#496399 234px,#965d99 275px,#995892 280px,#993e6c 304px,#99264a 339px,#99122d 392px,#990014 478px,#900 622px,#900 636px)"></i><i style="background:linear-gradient(90deg,#007499 41px,#026799 186px,#4b6199 235px,#995998 277px,#993f72 300px,#992850 333px,#991431 383px,#990217 463px,#990002 603px,#900 639px)"></i><i style="background:linear-gradient(90deg,#007299 41px,#026599 185px,#4a5e99 234px,#955799 275px,#995495 279px,#993b6e 303px,#99244d 337px,#99112f 389px,#990015 473px,#900 622px,#900 642px)"></i><i style="background:linear-gradient(90deg,#007099 42px,#016299 184px,#4a5b99 234px,#975499 276px,#99376c 305px,#99214a 341px,#990e2d 395px,#990015 478px,#900 628px,#900 644px)"></i><i style="background:linear-gradient(90deg,#006e99 43px,#026099 184px,#4a5999 234px,#975199 276px,#99346c 306px,#991f4a 342px,#990d2d 397px,#990016 475px,#990001 625px,#900 647px)"></i><i style="background:linear-gradient(90deg,#006c99 43px,#025e99 183px,#4b5699 234px,#974e99 276px,#993d7e 293px,#99275a 323px,#99143b 368px,#99031f 438px,#901 504px,#900 647px,#900 648px)"></i><i style="background:linear-gradient(90deg,#006a99 44px,#015c99 182px,#4a5499 233px,#964b99 276px,#994289 286px,#992c65 313px,#991844 353px,#990727 414px,#990018 471px,#990002 617px,#900 643px)"></i><i style="background:linear-gradient(90deg,#006899 44px,#015a99 181px,#4a5199 233px,#964999 276px,#99418d 284px,#992b67 311px,#991846 350px,#990729 410px,#990019 466px,#990003 607px,#900 637px)"></i><i style="background:linear-gradient(90deg,#006799 45px,#025799 181px,#4a4f99 233px,#994598 278px,#993072 302px,#991c50 337px,#990a31 390px,#99001c 457px,#990005 591px,#990001 632px)"></i><i style="background:linear-gradient(90deg,#006599 46px,#025599 180px,#494d99 232px,#964399 276px,#994093 281px,#992a6d 307px,#99184b 344px,#99072e 400px,#99001d 455px,#990006 587px,#990002 626px)"></i><i style="background:linear-gradient(90deg,#006399 46px,#015399 179px,#4a4a99 232px,#954199 276px,#993d93 281px,#99296d 307px,#99164b 345px,#99062e 402px,#99001d 453px,#990007 583px,#990003 620px)"></i><i style="background:linear-gradient(90deg,#006199 47px,#025199 179px,#4a4899 232px,#973e99 277px,#99276e 307px,#99154c 345px,#99052e 402px,#99001f 450px,#990008 578px,#990004 615px)"></i><i style="background:linear-gradient(90deg,#005f99 48px,#024f99 178px,#4b4699 232px,#973c99 277px,#99246d 308px,#99134b 346px,#99042e 404px,#99001e 454px,#990007 585px,#990005 609px)"></i><i style="background:linear-gradient(90deg,#005e99 48px,#024d99 177px,#494499 231px,#973999 277px,#99226c 309px,#99114a 348px,#99022d 407px,#990014 503px,#990006 603px)"></i><i style="background:linear-gradient(90deg,#005c99 49px,#014b99 176px,#4a4199 231px,#973799 277px,#992b81 293px,#99195d 325px,#99093d 372px,#990026 428px,#99000e 539px,#990006 598px)"></i><i style="background:linear-gradient(90deg,#005a99 50px,#024999 176px,#4a3f99 231px,#963499 277px,#992d8a 287px,#991b66 316px,#990b44 359px,#990029 421px,#990010 527px,#990007 592px)"></i><i style="background:linear-gradient(90deg,#005899 50px,#024899 175px,#4b3d99 231px,#993198 279px,#991f72 305px,#990f50 342px,#990132 398px,#990018 488px,#990008 586px)"></i><i style="background:linear-gradient(90deg,#005799 51px,#014699 174px,#4a3b99 230px,#963099 277px,#992c91 283px,#991b6c 311px,#990b4a 351px,#99002d 411px,#990014 510px,#990009 581px)"></i><i style="background:linear-gradient(90deg,#059 52px,#024499 174px,#4b3999 231px,#992c97 280px,#991b71 307px,#990c4e 346px,#990030 405px,#990016 500px,#99000a 575px)"></i><i style="background:linear-gradient(90deg,#005399 52px,#024299 173px,#4a3799 230px,#972b99 278px,#99186e 310px,#99094c 350px,#990031 403px,#990017 496px,#99000c 569px)"></i><i style="background:linear-gradient(90deg,#005199 53px,#024099 172px,#4b3599 230px,#972999 278px,#99166d 311px,#99084b 352px,#903 399px,#990019 490px,#99000d 564px)"></i><i style="background:linear-gradient(90deg,#005099 54px,#013f99 171px,#4a3399 229px,#972799 278px,#99146c 312px,#99064a 354px,#990035 396px,#99001a 485px,#99000e 558px)"></i><i style="background:linear-gradient(90deg,#004e99 54px,#023d99 171px,#4a3199 229px,#972599 278px,#99126c 313px,#99054a 355px,#990036 395px,#99001b 483px,#99000f 552px)"></i><i style="background:linear-gradient(90deg,#004c99 55px,#023b99 170px,#4a2f99 229px,#962399 278px,#991a84 293px,#990c60 326px,#99003f 375px,#990023 451px,#990010 547px)"></i><i style="background:linear-gradient(90deg,#004b99 56px,#013a99 169px,#492e99 228px,#962199 278px,#991b8b 288px,#990d66 319px,#990146 364px,#990029 433px,#901 541px)"></i><i style="background:linear-gradient(90deg,#004999 57px,#023899 169px,#4b2c99 229px,#991d97 281px,#990f70 310px,#99024e 351px,#990030 413px,#990016 513px,#990012 535px)"></i><i style="background:linear-gradient(90deg,#004899 57px,#023799 168px,#4a2a99 228px,#991b97 281px,#990e70 310px,#99014e 351px,#990030 413px,#990017 513px,#990014 530px)"></i><i style="background:linear-gradient(90deg,#004699 58px,#023599 167px,#4b2899 228px,#971a99 279px,#990b6e 313px,#99004c 356px,#99002e 421px,#990015 524px)"></i><i style="background:linear-gradient(90deg,#049 59px,#013499 166px,#4a2799 227px,#961999 278px,#991693 284px,#99096d 314px,#99004b 357px,#99002e 423px,#990016 518px)"></i><i style="background:linear-gradient(90deg,#004399 60px,#023299 166px,#4b2599 228px,#991698 281px,#990971 310px,#99004f 352px,#990031 415px,#990018 513px)"></i><i style="background:linear-gradient(90deg,#004199 60px,#023099 165px,#4a2399 227px,#971599 279px,#99066d 315px,#990051 350px,#990032 412px,#990019 507px)"></i><i style="background:linear-gradient(90deg,#004099 61px,#012f99 164px,#4b2199 227px,#971399 279px,#990773 309px,#905 344px,#990036 403px,#99001b 497px,#99001b 501px)"></i><i style="background:linear-gradient(90deg,#003e99 62px,#022d99 164px,#4b2099 227px,#991198 281px,#990571 311px,#990056 343px,#990037 402px,#99001c 495px,#99001c 496px)"></i><i style="background:linear-gradient(90deg,#003d99 63px,#022c99 163px,#4a1e99 226px,#960f99 279px,#990b8c 289px,#990067 322px,#990046 370px,#990029 444px,#99001e 490px)"></i><i style="background:linear-gradient(90deg,#003b99 64px,#022b99 162px,#4a1c99 226px,#990d97 282px,#990271 312px,#99004f 355px,#990031 420px,#99001f 484px)"></i><i style="background:linear-gradient(90deg,#003a99 64px,#012999 161px,#491b99 225px,#960c99 279px,#990991 286px,#99006c 318px,#99004a 364px,#99002d 434px,#990021 479px)"></i><i style="background:linear-gradient(90deg,#003899 65px,#022899 161px,#4b1999 226px,#970a99 280px,#99006e 316px,#99004c 362px,#99002e 431px,#902 473px)"></i><i style="background:linear-gradient(90deg,#003799 66px,#022699 160px,#4a1899 225px,#970899 280px,#990071 313px,#99004f 357px,#990031 424px,#990024 467px)"></i><i style="background:linear-gradient(90deg,#003599 67px,#022599 159px,#4a1699 225px,#970799 280px,#990076 309px,#990053 352px,#990034 416px,#990026 462px)"></i><i style="background:linear-gradient(90deg,#003499 68px,#022499 159px,#4b1599 225px,#970599 280px,#990078 307px,#905 349px,#990036 412px,#990028 456px)"></i><i style="background:linear-gradient(90deg,#003299 69px,#022299 158px,#4b1399 225px,#990297 283px,#990070 315px,#99004e 361px,#990030 430px,#99002a 450px)"></i><i style="background:linear-gradient(90deg,#003199 70px,#022199 157px,#4a1299 224px,#960299 280px,#908 294px,#990063 331px,#990042 385px,#99002c 445px)"></i><i style="background:linear-gradient(90deg,#002f99 71px,#012099 156px,#4a1099 224px,#990097 283px,#990071 315px,#99004f 361px,#990031 430px,#99002e 439px)"></i><i style="background:linear-gradient(90deg,#002e99 72px,#021f99 156px,#4b0f99 224px,#990097 283px,#990071 315px,#99004f 361px,#990031 431px,#990030 433px)"></i><i style="background:linear-gradient(90deg,#002c99 73px,#021d99 155px,#4a0e99 223px,#960099 280px,#990092 287px,#99006c 321px,#99004a 370px,#990032 428px)"></i><i style="background:linear-gradient(90deg,#002b99 73px,#021c99 154px,#4a0c99 223px,#900099 276px,#990096 284px,#990070 317px,#99004e 364px,#990034 422px)"></i><i style="background:linear-gradient(90deg,#002a99 74px,#021b99 154px,#4b0b99 223px,#890099 271px,#990096 284px,#990070 317px,#99004e 365px,#990037 416px)"></i><i style="background:linear-gradient(90deg,#002899 75px,#021a99 153px,#4b0a99 223px,#830099 267px,#990097 284px,#990071 317px,#99004e 365px,#990039 411px)"></i><i style="background:linear-gradient(90deg,#002799 76px,#021999 152px,#4a0899 222px,#7c0099 262px,#990097 284px,#990070 318px,#99004e 366px,#99003c 405px)"></i><i style="background:linear-gradient(90deg,#002599 77px,#011899 151px,#4a0799 222px,#780099 259px,#990097 284px,#990070 318px,#99004e 367px,#99003f 399px)"></i><i style="background:linear-gradient(90deg,#002499 78px,#021699 151px,#4b0699 222px,#740099 256px,#990097 284px,#990071 318px,#99004e 367px,#990041 394px)"></i><i style="background:linear-gradient(90deg,#002399 79px,#021599 150px,#4b0499 222px,#720099 254px,#990097 284px,#990071 318px,#99004f 367px,#904 388px)"></i><i style="background:linear-gradient(90deg,#002199 80px,#021499 149px,#4a0399 221px,#709 258px,#990098 284px,#990071 318px,#99004f 367px,#990047 382px)"></i><i style="background:linear-gradient(90deg,#002099 81px,#021399 149px,#4a0299 221px,#970099 282px,#99006d 323px,#99004c 374px,#99004a 377px)"></i><i style="background:linear-gradient(90deg,#001f99 82px,#021299 148px,#4b0199 221px,#970099 282px,#99006d 324px,#99004d 371px)"></i><i style="background:linear-gradient(90deg,#001d99 83px,#021199 147px,#4a0099 220px,#970099 282px,#99006d 324px,#990051 365px)"></i><i style="background:linear-gradient(90deg,#001c99 84px,#011099 146px,#4a0099 220px,#970099 282px,#99006c 325px,#990054 360px)"></i><i style="background:linear-gradient(90deg,#001b99 85px,#020f99 146px,#4a0099 220px,#970099 282px,#99006c 326px,#990058 354px)"></i><i style="background:linear-gradient(90deg,#001999 86px,#020e99 145px,#450099 215px,#920099 279px,#990096 286px,#990070 322px,#99005c 348px)"></i><i style="background:linear-gradient(90deg,#001899 87px,#020d99 144px,#410099 211px,#8e0099 276px,#990096 286px,#990070 322px,#990060 343px)"></i><i style="background:linear-gradient(90deg,#001799 88px,#020c99 144px,#3c0099 206px,#890099 272px,#990098 285px,#990071 321px,#990064 337px)"></i><i style="background:linear-gradient(90deg,#001599 89px,#020b99 143px,#390099 202px,#850099 269px,#990097 286px,#990070 323px,#990069 331px)"></i><i style="background:linear-gradient(90deg,#001499 91px,#020a99 142px,#340099 197px,#800099 265px,#990097 286px,#990070 323px,#99006d 326px)"></i><i style="background:linear-gradient(90deg,#001399 92px,#020999 141px,#310099 193px,#7c0099 262px,#990097 286px,#990073 320px)"></i><i style="background:linear-gradient(90deg,#019 93px,#020899 141px,#2d0099 189px,#790099 259px,#990097 286px,#990078 314px)"></i><i style="background:linear-gradient(90deg,#001099 94px,#020799 140px,#2a0099 185px,#750099 256px,#990097 286px,#99007d 309px)"></i><i style="background:linear-gradient(90deg,#000f99 95px,#020699 139px,#270099 182px,#730099 254px,#990097 286px,#990084 303px)"></i><i style="background:linear-gradient(90deg,#000e99 96px,#020599 139px,#260099 180px,#700099 252px,#990098 286px,#99008a 297px)"></i><i style="background:linear-gradient(90deg,#000c99 98px,#020499 138px,#250099 179px,#710099 252px,#990098 286px,#990090 292px)"></i><i style="background:linear-gradient(90deg,#000b99 99px,#020399 137px,#2a0099 183px,#740099 255px,#990098 286px)"></i><i style="background:linear-gradient(90deg,#000a99 100px,#020299 137px,#4b0099 217px,#920099 280px)"></i><i style="background:linear-gradient(90deg,#000899 102px,#020199 136px,#4b0099 217px,#8c0099 275px)"></i><i style="background:linear-gradient(90deg,#000799 103px,#020199 135px,#4a0099 216px,#850099 269px)"></i><i style="background:linear-gradient(90deg,#000699 104px,#020099 135px,#4c0099 217px,#7e0099 263px)"></i><i style="background:linear-gradient(90deg,#000499 106px,#020099 134px,#4b0099 216px,#780099 258px)"></i><i style="background:linear-gradient(90deg,#000399 107px,#020099 133px,#4b0099 216px,#710099 252px)"></i><i style="background:linear-gradient(90deg,#000299 109px,#030099 133px,#4b0099 216px,#6b0099 246px)"></i><i style="background:linear-gradient(90deg,#000199 110px,#020099 132px,#4b0099 215px,#650099 241px)"></i><i style="background:linear-gradient(90deg,#009 112px,#020099 131px,#4b0099 215px,#5f0099 235px)"></i><i style="background:linear-gradient(90deg,#009 114px,#030099 131px,#4b0099 215px,#590099 229px)"></i><i style="background:linear-gradient(90deg,#009 116px,#030099 131px,#4c0099 216px,#540099 224px)"></i><i style="background:linear-gradient(90deg,#009 118px,#030099 130px,#4c0099 215px,#4f0099 218px)"></i><i style="background:linear-gradient(90deg,#009 120px,#050099 132px,#490099 212px)"></i><i style="background:linear-gradient(90deg,#009 122px,#300099 184px,#450099 207px)"></i><i style="background:linear-gradient(90deg,#009 124px,#3f0099 201px)"></i><i style="background:linear-gradient(90deg,#030099 127px,#3a0099 195px)"></i><i style="background:linear-gradient(90deg,#060099 130px,#360099 190px)"></i><i style="background:linear-gradient(90deg,#080099 132px,#310099 184px)"></i><i style="background:linear-gradient(90deg,#0a0099 135px,#2d0099 178px)"></i><i style="background:linear-gradient(90deg,#0e0099 139px,#290099 173px)"></i><i style="background:linear-gradient(90deg,#109 142px,#240099 167px)"></i><i style="background:linear-gradient(90deg,#130099 144px,#200099 161px)"></i><i style="background:linear-gradient(90deg,#160099 148px,#1c0099 156px)"></i></div>
<div class="g" style="left:1160px;top:276px;width:740px;height:363px;clip-path:polygon(561.92px 181.23px,263.4px 1px,131.7px 361.45px)"><i style="background:linear-gradient(90deg,#00ff01 261px,#06ff00 268px)"></i><i style="background:linear-gradient(90deg,#00ff02 260px,#07ff00 268px,#0bff00 271px)"></i><i style="background:linear-gradient(90deg,#00ff04 259px,#04ff02 265px,#10ff00 274px)"></i><i style="background:linear-gradient(90deg,#00ff05 258px,#05ff03 265px,#15ff00 277px)"></i><i style="background:linear-gradient(90deg,#00ff07 258px,#07ff04 266px,#1cff00 281px)"></i><i style="background:linear-gradient(90deg,#00ff08 257px,#06ff06 264px,#21ff00 284px)"></i><i style="background:linear-gradient(90deg,#00ff0a 256px,#04ff08 262px,#27ff00 287px)"></i><i style="background:linear-gradient(90deg,#00ff0b 255px,#05ff09 262px,#2eff00 291px)"></i><i style="background:linear-gradient(90deg,#00ff0d 255px,#07ff0a 263px,#34ff00 294px)"></i><i style="background:linear-gradient(90deg,#00ff0e 254px,#04ff0c 260px,#3aff00 297px)"></i><i style="background:linear-gradient(90deg,#00ff10 253px,#04ff0e 259px,#42ff00 301px)"></i><i style="background:linear-gradient(90deg,#00ff12 252px,#05ff0f 259px,#48ff00 304px)"></i><i style="background:linear-gradient(90deg,#00ff13 252px,#06ff11 259px,#4fff00 307px)"></i><i style="background:linear-gradient(90deg,#00ff15 251px,#04ff13 257px,#57ff00 311px)"></i><i style="background:linear-gradient(90deg,#00ff16 250px,#04ff14 256px,#5eff00 314px)"></i><i style="background:linear-gradient(90deg,#00ff18 250px,#08ff15 258px,#65ff00 317px)"></i><i style="background:linear-gradient(90deg,#00ff1a 249px,#05ff17 255px,#62ff01 314px,#6eff00 321px)"></i><i style="background:linear-gradient(90deg,#00ff1b 248px,#04ff19 254px,#62ff03 313px,#75ff00 324px)"></i><i style="background:linear-gradient(90deg,#00ff1d 247px,#04ff1b 253px,#60ff05 311px,#7dff00 327px)"></i><i style="background:linear-gradient(90deg,#00ff1f 247px,#07ff1c 254px,#64ff06 312px,#85ff00 330px)"></i><i style="background:linear-gradient(90deg,#00ff20 246px,#05ff1e 252px,#61ff09 309px,#8fff00 334px)"></i><i style="background:linear-gradient(90deg,#0f2 245px,#04ff20 251px,#61ff0b 308px,#97ff00 337px)"></i><i style="background:linear-gradient(90deg,#00ff24 244px,#04ff22 250px,#61ff0d 307px,#a0ff00 340px)"></i><i style="background:linear-gradient(90deg,#00ff26 244px,#05ff24 250px,#61ff0f 306px,#abff00 344px)"></i><i style="background:linear-gradient(90deg,#00ff28 243px,#05ff26 249px,#61ff11 305px,#b4ff00 347px)"></i><i style="background:linear-gradient(90deg,#00ff2a 242px,#04ff28 248px,#62ff13 304px,#bdff00 350px)"></i><i style="background:linear-gradient(90deg,#00ff2b 242px,#07ff29 249px,#64ff14 304px,#c5ff00 352px,#c9ff00 354px)"></i><i style="background:linear-gradient(90deg,#00ff2d 241px,#05ff2b 247px,#62ff17 302px,#c3ff01 350px,#d3ff00 357px)"></i><i style="background:linear-gradient(90deg,#00ff2f 240px,#03ff2e 245px,#60ff19 300px,#c2ff04 348px,#deff00 360px)"></i><i style="background:linear-gradient(90deg,#00ff32 239px,#04ff30 245px,#61ff1c 299px,#c1ff07 346px,#ebff00 364px)"></i><i style="background:linear-gradient(90deg,#0f3 239px,#06ff31 245px,#63ff1d 299px,#c4ff08 346px,#f6ff00 367px)"></i><i style="background:linear-gradient(90deg,#00ff35 238px,#05ff33 244px,#61ff20 297px,#c3ff0b 344px,#fffd00 370px)"></i><i style="background:linear-gradient(90deg,#00ff38 237px,#03ff36 242px,#5fff23 295px,#bfff0e 341px,#fffe01 368px,#ffef00 374px)"></i><i style="background:linear-gradient(90deg,#00ff3a 236px,#04ff38 242px,#61ff24 295px,#c2ff10 341px,#ffff04 366px,#ffe500 377px)"></i><i style="background:linear-gradient(90deg,#00ff3c 236px,#06ff3a 242px,#62ff27 294px,#c3ff13 340px,#fffd06 365px,#ffdb00 380px)"></i><i style="background:linear-gradient(90deg,#00ff3e 235px,#04ff3c 240px,#60ff29 292px,#c0ff16 337px,#fffe09 363px,#ffd000 384px)"></i><i style="background:linear-gradient(90deg,#00ff40 234px,#03ff3e 239px,#60ff2c 291px,#c1ff18 336px,#fffd0b 362px,#ffcb00 385px,#ffc700 387px)"></i><i style="background:linear-gradient(90deg,#00ff42 233px,#04ff40 239px,#60ff2e 290px,#c2ff1b 335px,#fffe0e 360px,#ffcb01 383px,#ffbf00 390px)"></i><i style="background:linear-gradient(90deg,#0f4 233px,#06ff42 239px,#62ff30 290px,#c3ff1d 334px,#ff1 358px,#ffcc04 381px,#ffb700 393px)"></i><i style="background:linear-gradient(90deg,#00ff47 232px,#03ff45 237px,#61ff33 288px,#c1ff20 332px,#fffd14 357px,#ffcc06 379px,#ffae00 397px)"></i><i style="background:linear-gradient(90deg,#00ff49 231px,#03ff47 236px,#5fff36 286px,#c0ff23 330px,#ffff17 355px,#ffcd09 377px,#ffa700 400px)"></i><i style="background:linear-gradient(90deg,#00ff4b 231px,#06ff49 237px,#63ff38 287px,#c3ff25 330px,#fffd1a 354px,#ffcb0b 376px,#ffa000 403px)"></i><i style="background:linear-gradient(90deg,#00ff4e 230px,#04ff4c 235px,#61ff3b 285px,#c2ff29 328px,#fffe1d 352px,#ffcc0e 374px,#ff9d00 403px,#ff9800 407px)"></i><i style="background:linear-gradient(90deg,#00ff50 229px,#03ff4f 234px,#60ff3e 283px,#c0ff2c 326px,#ffff20 350px,#fc1 372px,#ff9f02 400px,#ff9200 410px)"></i><i style="background:linear-gradient(90deg,#00ff53 228px,#03ff51 233px,#60ff40 282px,#c1ff2f 325px,#fffe23 349px,#ffcb13 371px,#ff9c04 400px,#ff8c00 413px)"></i><i style="background:linear-gradient(90deg,#0f5 228px,#06ff53 234px,#62ff43 282px,#c3ff31 324px,#ffff26 347px,#ffcd16 368px,#ff9f07 396px,#ff8500 417px)"></i><i style="background:linear-gradient(90deg,#00ff57 227px,#04ff56 232px,#60ff46 280px,#c1ff35 322px,#fffd29 346px,#ffcc18 367px,#ff9e09 395px,#ff8000 420px)"></i><i style="background:linear-gradient(90deg,#00ff5a 226px,#03ff59 231px,#60ff48 279px,#c2ff37 321px,#fffe2d 344px,#ffcc1b 365px,#ff9e0b 393px,#ff7b00 423px)"></i><i style="background:linear-gradient(90deg,#00ff5d 225px,#03ff5b 230px,#5eff4c 277px,#beff3b 318px,#ffff30 342px,#ffcb1d 364px,#ff9c0d 392px,#ff7500 427px)"></i><i style="background:linear-gradient(90deg,#00ff5f 225px,#04ff5e 230px,#61ff4e 277px,#c2ff3e 318px,#fffe33 341px,#ffcb20 362px,#ff9e10 389px,#ff7300 426px,#ff7000 430px)"></i><i style="background:linear-gradient(90deg,#00ff62 224px,#04ff60 229px,#61ff51 276px,#c3ff41 317px,#ffff37 339px,#ffcc23 360px,#ff9e12 387px,#ff7402 423px,#ff6b00 433px)"></i><i style="background:linear-gradient(90deg,#00ff65 223px,#03ff63 228px,#5fff54 274px,#bfff45 314px,#fffd3a 338px,#ffca26 359px,#ff9c14 386px,#ff7304 422px,#f60 437px)"></i><i style="background:linear-gradient(90deg,#00ff67 223px,#05ff66 228px,#62ff57 274px,#c2ff47 314px,#fffe3e 336px,#ffcd2a 356px,#ff9f17 382px,#ff7607 417px,#ff6200 440px)"></i><i style="background:linear-gradient(90deg,#00ff6a 222px,#04ff69 227px,#62ff5a 273px,#c4ff4b 313px,#ffff41 334px,#ffcb2c 355px,#ff9c19 382px,#ff7307 418px,#ff5e00 443px)"></i><i style="background:linear-gradient(90deg,#00ff6d 221px,#04ff6b 226px,#60ff5d 271px,#bfff4f 310px,#fffe44 333px,#ffcc2f 353px,#ff9e1c 379px,#ff740a 414px,#ff5a00 446px)"></i><i style="background:linear-gradient(90deg,#00ff70 220px,#03ff6e 225px,#60ff61 270px,#c0ff52 309px,#ffff49 331px,#fc3 351px,#ff9e1e 377px,#ff740c 412px,#f50 450px)"></i><i style="background:linear-gradient(90deg,#00ff73 220px,#05ff71 225px,#60ff64 269px,#c2ff55 308px,#fffd4c 330px,#ffcb35 350px,#ff9d20 376px,#ff730e 411px,#ff5100 453px)"></i><i style="background:linear-gradient(90deg,#00ff76 219px,#04ff74 224px,#61ff67 268px,#c0ff59 306px,#fffe50 328px,#ffcd39 347px,#ffa024 372px,#ff7611 406px,#ff5000 453px,#ff4e00 456px)"></i><i style="background:linear-gradient(90deg,#00ff79 218px,#02ff78 222px,#5eff6b 266px,#beff5d 304px,#feff54 326px,#ffca3b 347px,#ff9b25 373px,#ff7111 408px,#ff4b00 457px,#ff4a00 460px)"></i><i style="background:linear-gradient(90deg,#00ff7c 217px,#03ff7a 222px,#5fff6e 265px,#bfff61 303px,#fffe57 325px,#ffcc3f 344px,#ff9e29 369px,#ff7415 403px,#ff4e03 450px,#ff4600 463px)"></i><i style="background:linear-gradient(90deg,#00ff7f 217px,#05ff7d 222px,#61ff71 265px,#c1ff64 302px,#ffff5c 323px,#ffcd43 342px,#ff9e2c 367px,#ff7518 400px,#ff4f05 446px,#ff4300 466px)"></i><i style="background:linear-gradient(90deg,#00ff82 216px,#02ff81 220px,#5fff75 263px,#bfff68 300px,#fffd5f 322px,#ffcb46 341px,#ff9d2e 366px,#ff7319 400px,#ff4d06 447px,#ff3f00 470px)"></i><i style="background:linear-gradient(90deg,#00ff85 215px,#02ff84 219px,#5dff79 261px,#bdff6c 298px,#fffe64 320px,#ffcc49 339px,#ff9d31 364px,#ff731b 397px,#ff4e08 443px,#ff3c00 473px)"></i><i style="background:linear-gradient(90deg,#00ff89 214px,#03ff87 219px,#60ff7c 261px,#c1ff70 298px,#feff68 318px,#ffca4c 338px,#ff9b33 363px,#ff721d 396px,#ff4d09 442px,#ff3900 476px)"></i><i style="background:linear-gradient(90deg,#00ff8c 214px,#05ff8b 219px,#62ff7f 261px,#c3ff74 297px,#fffe6c 317px,#ffcd51 335px,#ff9f38 359px,#ff7521 391px,#ff4f0c 436px,#ff3600 480px)"></i><i style="background:linear-gradient(90deg,#00ff8f 213px,#02ff8e 217px,#5eff84 258px,#beff78 294px,#ffff71 315px,#ffcb54 334px,#ff9d3a 358px,#ff7423 390px,#ff4e0e 435px,#f30 483px)"></i><i style="background:linear-gradient(90deg,#00ff93 212px,#02ff92 216px,#5eff87 257px,#bfff7c 293px,#fffd74 314px,#ffcc58 332px,#ff9d3d 356px,#ff7325 388px,#ff4d0f 433px,#ff3100 486px)"></i><i style="background:linear-gradient(90deg,#00ff96 212px,#05ff95 217px,#61ff8b 257px,#c0ff80 292px,#ffff79 312px,#ffcc5c 330px,#ff9f41 353px,#ff7529 384px,#ff5013 427px,#ff2e00 490px)"></i><i style="background:linear-gradient(90deg,#00ff9a 211px,#03ff99 215px,#5eff8f 255px,#bfff85 290px,#feff7e 310px,#ffc85d 330px,#ff9a42 354px,#ff7129 386px,#ff4b12 431px,#ff2b00 493px)"></i><i style="background:linear-gradient(90deg,#00ff9d 210px,#02ff9d 214px,#5fff93 254px,#c0ff89 289px,#fffe82 309px,#ffcb63 327px,#ff9d47 350px,#ff742d 381px,#ff4e16 424px,#ff2d02 486px,#ff2900 496px)"></i><i style="background:linear-gradient(90deg,#00ffa1 209px,#02ffa0 213px,#5fff97 253px,#beff8e 287px,#ff8 307px,#ffcc67 325px,#ff9d4a 348px,#ff7330 379px,#ff4e18 422px,#ff2c03 484px,#ff2600 499px)"></i><i style="background:linear-gradient(90deg,#00ffa5 209px,#05ffa4 214px,#62ff9b 253px,#c2ff92 287px,#fffd8b 306px,#ffcc6c 323px,#ff9d4e 346px,#ff7332 377px,#ff4d1a 420px,#ff2c04 482px,#ff2400 503px)"></i><i style="background:linear-gradient(90deg,#00ffa9 208px,#03ffa8 212px,#5fffa0 251px,#c1ff97 285px,#ffff91 304px,#ffcd70 321px,#ff9f52 343px,#ff7536 373px,#ff4f1d 415px,#ff2d07 475px,#ff2100 506px)"></i><i style="background:linear-gradient(90deg,#00ffad 207px,#02ffac 211px,#5dffa4 249px,#bfff9c 283px,#feff96 302px,#ffc871 321px,#ff9a52 344px,#ff7036 375px,#ff4b1d 418px,#ff2a06 480px,#ff1f00 509px)"></i><i style="background:linear-gradient(90deg,#00ffb1 206px,#01ffb0 210px,#5dffa8 248px,#bdffa1 281px,#fffe9b 301px,#ffcc78 318px,#ff9e58 340px,#ff733b 370px,#ff4e21 411px,#ff2c0a 471px,#ff1d00 513px)"></i><i style="background:linear-gradient(90deg,#00ffb5 206px,#03ffb4 210px,#60ffad 248px,#c1ffa5 281px,#feffa0 299px,#ffca7b 317px,#ff9c5b 339px,#ff723d 369px,#ff4d23 410px,#ff2b0b 470px,#ff1b00 516px)"></i><i style="background:linear-gradient(90deg,#00ffb9 205px,#03ffb8 209px,#5effb1 246px,#c0ffaa 279px,#fffda5 298px,#ffcd81 314px,#ffa061 335px,#ff7542 364px,#ff4f27 404px,#ff2d0e 462px,#ff1800 519px)"></i><i style="background:linear-gradient(90deg,#00ffbd 204px,#02ffbc 208px,#5effb6 245px,#beffb0 277px,#ffffab 296px,#ffcd86 312px,#ffa065 333px,#ff7646 361px,#ff502a 400px,#ff2e11 457px,#ff1600 523px)"></i><i style="background:linear-gradient(90deg,#00ffc1 204px,#04ffc1 208px,#61ffbb 245px,#c2ffb4 277px,#fffdaf 295px,#ffcc8a 311px,#ff9e67 332px,#ff7548 360px,#ff4f2c 399px,#ff2d12 456px,#ff1400 526px)"></i><i style="background:linear-gradient(90deg,#00ffc6 203px,#03ffc5 207px,#5fffc0 243px,#c0ffba 275px,#fffeb6 293px,#ffcc8f 309px,#ff9e6b 330px,#ff744b 358px,#ff4f2e 397px,#ff2d14 453px,#ff1200 529px)"></i><i style="background:linear-gradient(90deg,#00ffca 202px,#02ffca 206px,#5fffc5 242px,#beffbf 273px,#feffbc 291px,#ffca92 308px,#ff9c6e 329px,#ff734d 357px,#ff4d2f 396px,#ff2c15 453px,#ff1000 533px)"></i><i style="background:linear-gradient(90deg,#00ffcf 201px,#02ffce 205px,#5fffca 241px,#c0ffc5 272px,#fffdc0 290px,#ffcb97 306px,#ff9c72 327px,#ff7350 355px,#ff4d32 394px,#ff2c17 450px,#ff0e00 536px)"></i><i style="background:linear-gradient(90deg,#00ffd3 201px,#04ffd3 205px,#60ffcf 240px,#c1ffca 271px,#ffffc8 288px,#ffce9f 303px,#ffa079 323px,#ff7656 350px,#ff5037 387px,#ff2e1b 441px,#ff1103 523px,#ff0d00 539px)"></i><i style="background:linear-gradient(90deg,#00ffd8 200px,#03ffd8 204px,#60ffd4 239px,#bfffd0 269px,#fffdcc 287px,#ffcca3 302px,#ff9e7c 322px,#ff7458 349px,#ff4f39 386px,#ff2d1c 440px,#ff1004 522px,#ff0b00 543px)"></i><i style="background:linear-gradient(90deg,#0fd 199px,#02ffdc 203px,#5dffd9 237px,#bdffd6 267px,#fffed3 285px,#ffcda8 300px,#ff9e80 320px,#ff745c 347px,#ff4e3b 384px,#ff2d1e 438px,#ff0f05 520px,#ff0900 546px)"></i><i style="background:linear-gradient(90deg,#00ffe2 198px,#02ffe1 202px,#5dffdf 236px,#bfffdc 266px,#feffda 283px,#ffc8a9 300px,#ff9b81 320px,#ff715d 347px,#ff4c3b 385px,#ff2a1e 440px,#ff0d04 524px,#ff0700 549px)"></i><i style="background:linear-gradient(90deg,#00ffe7 198px,#04ffe6 202px,#61ffe4 236px,#c0ffe2 265px,#fffedf 282px,#ffcbb2 297px,#ff9d88 317px,#ff7362 343px,#ff4d40 380px,#ff2c22 433px,#ff0f07 514px,#ff0600 552px)"></i><i style="background:linear-gradient(90deg,#00ffec 197px,#03ffec 201px,#5effea 234px,#beffe8 263px,#ffffe7 280px,#ffccb8 295px,#ff9f8e 314px,#ff7467 340px,#ff4f44 376px,#ff2d25 428px,#ff100a 507px,#ff0400 556px)"></i><i style="background:linear-gradient(90deg,#00fff1 196px,#02fff1 200px,#5efff0 233px,#bfffef 262px,#fffdec 279px,#ffcabc 294px,#ff9d91 313px,#ff7369 339px,#ff4d46 375px,#ff2c26 427px,#ff0f0b 506px,#ff0300 559px)"></i><i style="background:linear-gradient(90deg,#00fff7 195px,#02fff6 199px,#5ffff6 232px,#bdfff5 260px,#fffef4 277px,#ffcec5 291px,#ff9f98 310px,#ff7570 335px,#ff4f4b 370px,#ff2e2b 420px,#ff110e 496px,#ff0100 562px)"></i><i style="background:linear-gradient(90deg,#00fffc 195px,#04fffc 199px,#5ffffc 231px,#bffffc 259px,#fefffc 275px,#ffc8c6 291px,#ff9b99 310px,#ff716f 336px,#ff4b4a 372px,#ff2a2a 424px,#ff0d0d 504px,#f00 564px)"></i><i style="background:linear-gradient(90deg,#00fcff 194px,#03fcff 198px,#5efcff 230px,#befbff 258px,#fffafd 275px,#ffc9cd 289px,#ff9b9e 308px,#ff7274 333px,#ff4c4f 368px,#ff2b2d 419px,#ff0e10 496px,#f00 563px)"></i><i style="background:linear-gradient(90deg,#00f7ff 193px,#02f7ff 197px,#5ff6ff 230px,#bef5ff 258px,#fff3fe 275px,#ffc4cd 289px,#ff979f 308px,#ff6f75 333px,#ff4a50 368px,#ff292e 419px,#ff0d10 496px,#ff0002 558px)"></i><i style="background:linear-gradient(90deg,#00f2ff 193px,#04f1ff 197px,#60f0ff 230px,#c2eeff 259px,#ffedff 275px,#ffbfce 289px,#ff93a0 308px,#ff6c76 333px,#ff4851 368px,#ff282f 419px,#ff0c11 496px,#ff0004 553px)"></i><i style="background:linear-gradient(90deg,#00ecff 192px,#03ecff 196px,#5eeaff 229px,#bee8ff 258px,#ffe6ff 275px,#ffb7cc 290px,#ff8d9f 309px,#ff6675 335px,#ff434f 371px,#ff242d 423px,#ff0910 502px,#ff0005 548px)"></i><i style="background:linear-gradient(90deg,#00e7ff 191px,#03e7ff 195px,#60e4ff 229px,#bee2ff 258px,#fee0ff 275px,#ffb0ca 291px,#ff869c 311px,#ff6072 338px,#ff3e4d 375px,#ff202b 429px,#ff060e 512px,#ff0007 543px)"></i><i style="background:linear-gradient(90deg,#00e2ff 190px,#02e2ff 194px,#5edfff 228px,#bfdcff 258px,#fed9ff 275px,#ffa9c8 292px,#ff819b 312px,#ff5c72 339px,#ff3b4c 377px,#ff1d2b 432px,#ff040e 516px,#ff0008 539px)"></i><i style="background:linear-gradient(90deg,#0df 190px,#04ddff 194px,#5fd9ff 228px,#bfd6ff 258px,#fed3ff 275px,#ffa2c6 293px,#ff7a98 314px,#ff566f 342px,#ff364a 381px,#ff1a29 438px,#ff010c 525px,#ff000a 534px)"></i><i style="background:linear-gradient(90deg,#00d8ff 189px,#03d8ff 193px,#60d4ff 228px,#bfd0ff 258px,#ffcbfd 276px,#ffa2cc 291px,#ff7b9f 311px,#ff5875 338px,#ff384f 375px,#ff1c2e 429px,#ff0310 511px,#ff000c 529px)"></i><i style="background:linear-gradient(90deg,#00d4ff 188px,#02d3ff 192px,#5ecfff 227px,#bfcaff 258px,#ffc6fe 276px,#ff9bcb 292px,#ff769e 312px,#ff5474 339px,#ff354f 377px,#ff192d 432px,#ff0110 516px,#ff000e 524px)"></i><i style="background:linear-gradient(90deg,#00cfff 187px,#02ceff 191px,#5fc9ff 227px,#bfc4ff 258px,#ffc0fe 276px,#ff97cb 292px,#ff719d 313px,#ff5073 341px,#ff314d 380px,#ff162c 436px,#ff0010 519px,#ff000f 520px)"></i><i style="background:linear-gradient(90deg,#00caff 187px,#03caff 191px,#60c4ff 227px,#c0bfff 258px,#fbf 276px,#ff93cc 292px,#ff6e9e 313px,#ff4d74 341px,#ff2f4e 380px,#ff152d 436px,#f01 515px)"></i><i style="background:linear-gradient(90deg,#00c6ff 186px,#03c5ff 190px,#5ebfff 226px,#c0b9ff 258px,#ffb5ff 276px,#ff8fcd 292px,#ff6b9f 313px,#ff4a75 341px,#ff2d4f 380px,#ff132e 436px,#ff0013 510px)"></i><i style="background:linear-gradient(90deg,#00c1ff 185px,#02c1ff 189px,#5fbbff 226px,#c0b4ff 258px,#ffb0ff 276px,#ff88cb 293px,#ff669e 314px,#ff4673 343px,#ff2a4e 383px,#ff102c 441px,#ff0015 505px)"></i><i style="background:linear-gradient(90deg,#00bdff 185px,#04bcff 189px,#60b6ff 226px,#c0afff 258px,#feaaff 276px,#ff82c9 294px,#ff609b 316px,#ff4272 345px,#ff264c 386px,#ff0e2b 445px,#ff0017 501px)"></i><i style="background:linear-gradient(90deg,#00b9ff 184px,#03b8ff 188px,#5eb1ff 225px,#c0aaff 258px,#ffa3fd 277px,#ff7eca 294px,#ff5d9c 316px,#ff3f72 346px,#ff244c 387px,#ff0c2b 447px,#ff0019 496px)"></i><i style="background:linear-gradient(90deg,#00b5ff 183px,#02b4ff 187px,#5fadff 225px,#c0a5ff 258px,#ff9efd 277px,#ff7bcb 294px,#ff5a9d 316px,#ff3c73 346px,#ff224d 387px,#ff0a2c 447px,#ff001c 491px)"></i><i style="background:linear-gradient(90deg,#00b1ff 182px,#02b0ff 186px,#5ea8ff 224px,#bda0ff 257px,#ff99fe 277px,#ff77cb 294px,#ff579e 316px,#ff3a73 346px,#ff204e 387px,#ff092d 447px,#ff001e 486px)"></i><i style="background:linear-gradient(90deg,#00adff 182px,#03acff 186px,#5fa4ff 224px,#c19bff 258px,#ff95fe 277px,#ff73cc 294px,#ff549e 316px,#ff3874 346px,#ff1e4e 388px,#ff072d 448px,#ff0020 481px)"></i><i style="background:linear-gradient(90deg,#00a9ff 181px,#03a8ff 185px,#609fff 224px,#c196ff 258px,#ff90fe 277px,#ff6fcd 294px,#ff519f 316px,#ff3575 346px,#ff1c4f 388px,#ff062e 448px,#f02 477px)"></i><i style="background:linear-gradient(90deg,#00a5ff 180px,#02a4ff 184px,#5e9bff 223px,#be92ff 257px,#ff8bff 277px,#ff6bcd 294px,#ff4ea0 316px,#ff3376 346px,#ff1b50 388px,#ff052e 448px,#ff0025 472px)"></i><i style="background:linear-gradient(90deg,#00a1ff 179px,#04a0ff 184px,#6297ff 224px,#c18dff 258px,#ff87ff 277px,#f6c 295px,#ff499e 318px,#ff2f74 349px,#ff174e 392px,#ff022d 454px,#ff0027 467px)"></i><i style="background:linear-gradient(90deg,#009dff 179px,#059cff 184px,#6292ff 224px,#c488ff 259px,#fe82ff 277px,#ff61ca 296px,#ff459d 319px,#ff2c73 350px,#ff154e 393px,#ff002c 456px,#ff002a 462px)"></i><i style="background:linear-gradient(90deg,#009aff 178px,#0299ff 182px,#5e8fff 222px,#be84ff 257px,#ff7cfd 278px,#ff5ecb 296px,#ff439e 319px,#ff2a74 350px,#ff134e 394px,#ff002d 457px,#ff002c 458px)"></i><i style="background:linear-gradient(90deg,#0096ff 177px,#0295ff 181px,#5f8bff 222px,#bf80ff 257px,#ff78fd 278px,#ff5acb 296px,#ff3f9d 320px,#ff2673 352px,#ff114e 396px,#ff002f 453px)"></i><i style="background:linear-gradient(90deg,#0093ff 176px,#0392ff 181px,#6087ff 222px,#c27bff 258px,#ff73fe 278px,#ff57cc 296px,#ff3c9e 320px,#ff2474 352px,#ff0f4e 396px,#ff0032 448px)"></i><i style="background:linear-gradient(90deg,#008fff 176px,#058eff 181px,#6183ff 222px,#c277ff 258px,#ff6ffe 278px,#ff54cd 296px,#ff3a9e 320px,#ff2274 352px,#ff0d4e 397px,#ff0035 443px)"></i><i style="background:linear-gradient(90deg,#008cff 175px,#028bff 179px,#5f7fff 221px,#bf73ff 257px,#ff6bfe 278px,#ff50cd 296px,#ff379f 320px,#ff2075 352px,#ff0c4f 397px,#ff0038 438px)"></i><i style="background:linear-gradient(90deg,#0089ff 174px,#0487ff 179px,#607bff 221px,#c26fff 258px,#ff67ff 278px,#ff4dce 296px,#ff35a0 320px,#ff1e76 352px,#ff0a50 397px,#ff003b 434px)"></i><i style="background:linear-gradient(90deg,#0085ff 174px,#0584ff 179px,#6178ff 221px,#c26bff 258px,#ff63ff 278px,#ff49cc 297px,#ff319f 321px,#ff1b75 354px,#ff074f 400px,#ff003e 429px)"></i><i style="background:linear-gradient(90deg,#0082ff 173px,#0581ff 178px,#6274ff 221px,#c267ff 258px,#fe5fff 278px,#ff44cb 298px,#ff2d9d 323px,#ff1872 357px,#ff054d 404px,#ff0041 424px)"></i><i style="background:linear-gradient(90deg,#007fff 172px,#027eff 176px,#5e71ff 219px,#c064ff 257px,#ff5afd 279px,#ff41cb 298px,#ff2b9d 323px,#ff1673 357px,#ff034e 404px,#ff0045 419px)"></i><i style="background:linear-gradient(90deg,#007cff 171px,#037aff 176px,#5f6dff 219px,#c060ff 257px,#ff56fd 279px,#ff3ecc 298px,#ff289e 323px,#ff1474 357px,#ff024e 404px,#ff0048 415px)"></i><i style="background:linear-gradient(90deg,#0078ff 171px,#0577ff 176px,#626aff 220px,#c35cff 258px,#ff52fe 279px,#ff3bcd 298px,#ff269f 323px,#ff1275 357px,#ff004f 404px,#ff004b 410px)"></i><i style="background:linear-gradient(90deg,#0075ff 170px,#0474ff 175px,#6166ff 219px,#c058ff 257px,#ff4ffe 279px,#ff37cb 299px,#ff229d 325px,#ff0f73 360px,#ff004f 405px)"></i><i style="background:linear-gradient(90deg,#0073ff 169px,#0471ff 174px,#6163ff 219px,#c354ff 258px,#ff4bfe 279px,#ff34cc 299px,#ff209d 325px,#ff0d73 360px,#ff0053 400px)"></i><i style="background:linear-gradient(90deg,#0070ff 168px,#036eff 173px,#6060ff 218px,#c051ff 257px,#ff47ff 279px,#ff31cc 299px,#ff1d9e 325px,#ff0b74 360px,#ff0057 395px)"></i><i style="background:linear-gradient(90deg,#006dff 168px,#046bff 173px,#615dff 218px,#c14eff 257px,#f4f 279px,#ff2fcd 299px,#ff1b9f 325px,#ff0975 360px,#ff005b 391px)"></i><i style="background:linear-gradient(90deg,#006aff 167px,#0468ff 172px,#6259ff 218px,#c34aff 258px,#fe40ff 279px,#ff2ac9 301px,#ff179b 328px,#ff0672 364px,#ff005f 386px)"></i><i style="background:linear-gradient(90deg,#0067ff 166px,#0366ff 171px,#6057ff 217px,#c147ff 257px,#ff3cfd 280px,#ff28cc 300px,#ff169d 327px,#ff0573 363px,#ff0064 381px)"></i><i style="background:linear-gradient(90deg,#0064ff 166px,#0563ff 171px,#6153ff 217px,#c143ff 257px,#ff39fd 280px,#ff25ca 301px,#ff139d 328px,#ff0373 364px,#ff0069 376px)"></i><i style="background:linear-gradient(90deg,#0062ff 165px,#0460ff 170px,#6250ff 217px,#c440ff 258px,#ff35fe 280px,#ff22cb 301px,#ff119d 328px,#ff0173 365px,#ff006d 372px)"></i><i style="background:linear-gradient(90deg,#005fff 164px,#045dff 169px,#604eff 216px,#c13dff 257px,#ff32fe 280px,#ff1fcc 301px,#ff0f9e 328px,#ff0074 365px,#ff0072 367px)"></i><i style="background:linear-gradient(90deg,#005cff 163px,#035bff 168px,#5f4bff 215px,#bf3aff 256px,#ff2ffe 280px,#ff1dcc 301px,#ff0c9f 328px,#f07 362px)"></i><i style="background:linear-gradient(90deg,#005aff 163px,#0458ff 168px,#6247ff 216px,#c436ff 258px,#ff2cff 280px,#ff1acd 301px,#ff0a9e 329px,#ff007d 357px)"></i><i style="background:linear-gradient(90deg,#0057ff 162px,#0456ff 167px,#6145ff 215px,#c233ff 257px,#ff28ff 280px,#ff17cb 302px,#ff079d 330px,#ff0082 353px)"></i><i style="background:linear-gradient(90deg,#05f 161px,#0353ff 166px,#6142ff 215px,#c230ff 257px,#ff24fd 281px,#ff14ca 303px,#ff059d 331px,#f08 348px)"></i><i style="background:linear-gradient(90deg,#0052ff 160px,#0351ff 165px,#603fff 214px,#c22dff 257px,#ff21fd 281px,#ff11ca 303px,#ff039c 332px,#ff008e 343px)"></i><i style="background:linear-gradient(90deg,#0050ff 160px,#044eff 165px,#613dff 214px,#c22aff 257px,#ff1efd 281px,#ff0fcb 303px,#ff019d 332px,#ff0095 338px)"></i><i style="background:linear-gradient(90deg,#004dff 159px,#044cff 164px,#613aff 214px,#c227ff 257px,#ff1cfe 281px,#ff0ccc 303px,#ff009d 332px,#ff009c 333px)"></i><i style="background:linear-gradient(90deg,#004bff 158px,#0349ff 163px,#6037ff 213px,#c225ff 257px,#ff19fe 281px,#ff0acc 303px,#ff00a2 329px)"></i><i style="background:linear-gradient(90deg,#0049ff 157px,#0347ff 162px,#5f35ff 212px,#c022ff 256px,#ff16fe 281px,#ff08cd 303px,#f0a 324px)"></i><i style="background:linear-gradient(90deg,#0046ff 157px,#0445ff 162px,#6232ff 213px,#c21fff 257px,#ff13ff 281px,#ff05cd 303px,#ff00b2 319px)"></i><i style="background:linear-gradient(90deg,#04f 156px,#0342ff 161px,#6030ff 212px,#c01dff 256px,#ff10ff 281px,#ff03cc 304px,#ff00ba 314px)"></i><i style="background:linear-gradient(90deg,#0042ff 155px,#0340ff 160px,#5f2eff 211px,#c01aff 256px,#ff0dfd 282px,#ff00cb 305px,#ff00c2 310px)"></i><i style="background:linear-gradient(90deg,#003fff 155px,#063dff 161px,#642aff 213px,#c516ff 258px,#ff0afd 282px,#ff00cb 305px)"></i><i style="background:linear-gradient(90deg,#003dff 154px,#043cff 159px,#6028ff 211px,#c115ff 256px,#ff07fe 282px,#ff00d5 300px)"></i><i style="background:linear-gradient(90deg,#003bff 153px,#0339ff 158px,#6126ff 211px,#c311ff 257px,#ff05fe 282px,#ff00e0 295px)"></i><i style="background:linear-gradient(90deg,#0039ff 152px,#0437ff 158px,#6223ff 211px,#c30fff 257px,#ff02fe 282px,#ff00eb 290px)"></i><i style="background:linear-gradient(90deg,#0037ff 152px,#0635ff 158px,#6221ff 211px,#c30cff 257px,#ff00fe 282px,#ff00f5 286px)"></i><i style="background:linear-gradient(90deg,#0035ff 151px,#0333ff 156px,#611fff 210px,#c30aff 257px,#fd00ff 281px)"></i><i style="background:linear-gradient(90deg,#03f 150px,#0331ff 155px,#601dff 209px,#c108ff 256px,#f000ff 276px)"></i><i style="background:linear-gradient(90deg,#0031ff 149px,#042fff 155px,#611bff 209px,#c105ff 256px,#e400ff 271px)"></i><i style="background:linear-gradient(90deg,#002fff 149px,#052dff 155px,#6318ff 210px,#c402ff 257px,#da00ff 267px)"></i><i style="background:linear-gradient(90deg,#002dff 148px,#032bff 153px,#6016ff 208px,#c100ff 256px,#cf00ff 262px)"></i><i style="background:linear-gradient(90deg,#002bff 147px,#0429ff 153px,#6114ff 208px,#c200ff 256px,#c400ff 257px)"></i><i style="background:linear-gradient(90deg,#0029ff 147px,#0726ff 154px,#6311ff 209px,#b900ff 252px)"></i><i style="background:linear-gradient(90deg,#0027ff 146px,#0525ff 152px,#620fff 208px,#ae00ff 247px)"></i><i style="background:linear-gradient(90deg,#0025ff 145px,#0323ff 150px,#5f0eff 206px,#a600ff 243px)"></i><i style="background:linear-gradient(90deg,#0023ff 144px,#0421ff 150px,#620cff 207px,#9d00ff 238px)"></i><i style="background:linear-gradient(90deg,#0021ff 144px,#071fff 151px,#6409ff 208px,#9300ff 233px)"></i><i style="background:linear-gradient(90deg,#0020ff 143px,#051eff 149px,#6108ff 206px,#8a00ff 228px)"></i><i style="background:linear-gradient(90deg,#001eff 142px,#041cff 148px,#6206ff 206px,#8300ff 224px)"></i><i style="background:linear-gradient(90deg,#001cff 141px,#041aff 147px,#6104ff 205px,#7a00ff 219px)"></i><i style="background:linear-gradient(90deg,#001aff 141px,#0618ff 148px,#6301ff 206px,#7100ff 214px)"></i><i style="background:linear-gradient(90deg,#0019ff 140px,#0517ff 146px,#6200ff 205px,#6900ff 209px)"></i><i style="background:linear-gradient(90deg,#0017ff 139px,#0415ff 145px,#6100ff 204px,#6200ff 205px)"></i><i style="background:linear-gradient(90deg,#0016ff 138px,#0413ff 144px,#5b00ff 200px)"></i><i style="background:linear-gradient(90deg,#0014ff 138px,#0611ff 145px,#5300ff 195px)"></i><i style="background:linear-gradient(90deg,#0012ff 137px,#0410ff 143px,#4b00ff 190px)"></i><i style="background:linear-gradient(90deg,#01f 136px,#040eff 142px,#40f 185px)"></i><i style="background:linear-gradient(90deg,#000fff 136px,#080cff 144px,#3e00ff 181px)"></i><i style="background:linear-gradient(90deg,#000dff 135px,#060bff 142px,#3700ff 176px)"></i><i style="background:linear-gradient(90deg,#000cff 134px,#040aff 140px,#3100ff 171px)"></i><i style="background:linear-gradient(90deg,#000aff 133px,#0508ff 140px,#2a00ff 166px)"></i><i style="background:linear-gradient(90deg,#0009ff 133px,#0706ff 141px,#2500ff 162px)"></i><i style="background:linear-gradient(90deg,#0007ff 132px,#0605ff 139px,#1f00ff 157px)"></i><i style="background:linear-gradient(90deg,#0006ff 131px,#0404ff 137px,#1800ff 152px)"></i><i style="background:linear-gradient(90deg,#0004ff 130px,#0502ff 137px,#1200ff 147px)"></i><i style="background:linear-gradient(90deg,#0003ff 130px,#0700ff 138px,#0d00ff 142px)"></i><i style="background:linear-gradient(90deg,#0001ff 129px,#0500ff 136px,#0800ff 138px)"></i><i style="background:linear-gradient(90deg,#00a4ff -1162px,#00a4ff -1157px)"></i></div>
<div class="g r3" style="left:1642px;top:124px;width:250px;height:211px;overflow:hidden"><i style="background:linear-gradient(90deg,#699900 -2px,#999700 208px,#998d00 252px)"></i><i style="background:linear-gradient(90deg,#6a9900 -2px,#999700 206px,#998c00 252px)"></i><i style="background:linear-gradient(90deg,#6a9900 -2px,#999700 204px,#998c00 252px)"></i><i style="background:linear-gradient(90deg,#6a9900 -2px,#999700 202px,#998b00 252px)"></i><i style="background:linear-gradient(90deg,#6b9900 -2px,#999700 199px,#998b00 252px)"></i><i style="background:linear-gradient(90deg,#6b9900 -2px,#999700 197px,#998a00 252px)"></i><i style="background:linear-gradient(90deg,#6c9900 -2px,#999700 195px,#998a00 252px)"></i><i style="background:linear-gradient(90deg,#6c9900 -2px,#999700 193px,#998900 252px)"></i><i style="background:linear-gradient(90deg,#6d9900 -2px,#999700 191px,#998900 252px)"></i><i style="background:linear-gradient(90deg,#6d9901 -2px,#999700 189px,#980 252px)"></i><i style="background:linear-gradient(90deg,#6d9901 -2px,#999700 186px,#980 252px)"></i><i style="background:linear-gradient(90deg,#6e9901 -2px,#999700 184px,#998700 252px)"></i><i style="background:linear-gradient(90deg,#6e9901 -2px,#999700 182px,#998700 252px)"></i><i style="background:linear-gradient(90deg,#6f9902 -2px,#999700 180px,#998600 252px)"></i><i style="background:linear-gradient(90deg,#6f9902 -2px,#999700 178px,#998600 252px)"></i><i style="background:linear-gradient(90deg,#709902 -2px,#999700 176px,#998500 252px)"></i><i style="background:linear-gradient(90deg,#709902 -2px,#999700 173px,#998500 252px)"></i><i style="background:linear-gradient(90deg,#709902 -2px,#999700 171px,#998400 252px)"></i><i style="background:linear-gradient(90deg,#719903 -2px,#999700 169px,#998400 252px)"></i><i style="background:linear-gradient(90deg,#719903 -2px,#999700 167px,#998400 252px)"></i><i style="background:linear-gradient(90deg,#729903 -2px,#999700 163px,#998300 252px)"></i><i style="background:linear-gradient(90deg,#729903 -2px,#990 156px,#998300 252px)"></i><i style="background:linear-gradient(90deg,#739904 -2px,#990 153px,#998200 252px)"></i><i style="background:linear-gradient(90deg,#739904 -2px,#990 151px,#998200 252px)"></i><i style="background:linear-gradient(90deg,#749904 -2px,#999800 151px,#998100 252px)"></i><i style="background:linear-gradient(90deg,#749904 -2px,#999800 151px,#998100 252px)"></i><i style="background:linear-gradient(90deg,#749905 -2px,#999700 152px,#998000 252px)"></i><i style="background:linear-gradient(90deg,#759905 -2px,#999700 150px,#998000 252px)"></i><i style="background:linear-gradient(90deg,#759905 -2px,#999700 147px,#997f00 252px)"></i><i style="background:linear-gradient(90deg,#769905 -2px,#999700 145px,#997f00 252px)"></i><i style="background:linear-gradient(90deg,#769906 -2px,#999700 143px,#997e00 252px)"></i><i style="background:linear-gradient(90deg,#779906 -2px,#999700 141px,#997e00 252px)"></i><i style="background:linear-gradient(90deg,#779906 -2px,#999700 139px,#997d00 252px)"></i><i style="background:linear-gradient(90deg,#789906 -2px,#999700 137px,#997d00 252px)"></i><i style="background:linear-gradient(90deg,#789907 -2px,#999700 134px,#997d00 252px)"></i><i style="background:linear-gradient(90deg,#799907 -2px,#999700 132px,#997c00 252px)"></i><i style="background:linear-gradient(90deg,#799907 -2px,#999700 130px,#997c00 252px)"></i><i style="background:linear-gradient(90deg,#7a9907 -2px,#999700 128px,#997b00 252px)"></i><i style="background:linear-gradient(90deg,#7a9908 -2px,#999701 126px,#997b00 252px)"></i><i style="background:linear-gradient(90deg,#7b9908 -2px,#999701 124px,#997a00 252px)"></i><i style="background:linear-gradient(90deg,#7b9908 -2px,#999702 122px,#997a00 252px)"></i><i style="background:linear-gradient(90deg,#7c9908 -2px,#999702 119px,#997900 252px)"></i><i style="background:linear-gradient(90deg,#7c9909 -2px,#999702 117px,#997900 252px)"></i><i style="background:linear-gradient(90deg,#7d9909 -2px,#999703 115px,#997800 252px)"></i><i style="background:linear-gradient(90deg,#7d9909 -2px,#999703 113px,#997800 252px)"></i><i style="background:linear-gradient(90deg,#7e990a -2px,#999703 111px,#997800 252px)"></i><i style="background:linear-gradient(90deg,#7e990a -2px,#999704 109px,#970 250px,#970 252px)"></i><i style="background:linear-gradient(90deg,#7f990a -2px,#999704 106px,#997800 247px,#970 252px)"></i><i style="background:linear-gradient(90deg,#7f990a -2px,#999705 104px,#970 247px,#997600 252px)"></i><i style="background:linear-gradient(90deg,#80990b -2px,#999705 102px,#997600 248px,#997600 252px)"></i><i style="background:linear-gradient(90deg,#80990b -2px,#999705 100px,#997600 249px,#997500 252px)"></i><i style="background:linear-gradient(90deg,#81990b -2px,#999706 98px,#997500 252px)"></i><i style="background:linear-gradient(90deg,#81990b -2px,#999706 96px,#997400 252px)"></i><i style="background:linear-gradient(90deg,#82990c -2px,#999707 94px,#997400 252px)"></i><i style="background:linear-gradient(90deg,#82990c -2px,#999707 91px,#997400 252px)"></i><i style="background:linear-gradient(90deg,#83990c -2px,#999707 89px,#997300 252px)"></i><i style="background:linear-gradient(90deg,#83990d -2px,#999708 87px,#997300 252px)"></i><i style="background:linear-gradient(90deg,#84990d -2px,#999708 85px,#997200 252px)"></i><i style="background:linear-gradient(90deg,#84990d -2px,#999708 83px,#997200 252px)"></i><i style="background:linear-gradient(90deg,#85990d -2px,#999709 81px,#997200 250px,#997100 252px)"></i><i style="background:linear-gradient(90deg,#85990e -2px,#999709 78px,#997200 247px,#997100 252px)"></i><i style="background:linear-gradient(90deg,#86990e -2px,#99970a 76px,#997200 245px,#997100 252px)"></i><i style="background:linear-gradient(90deg,#86990e -2px,#99970a 74px,#997200 242px,#997000 252px)"></i><i style="background:linear-gradient(90deg,#87990f -2px,#99970b 72px,#997201 240px,#997000 252px)"></i><i style="background:linear-gradient(90deg,#87990f -2px,#99970b 70px,#997201 238px,#996f00 252px)"></i><i style="background:linear-gradient(90deg,#88990f -2px,#99970b 68px,#997201 236px,#996f00 252px)"></i><i style="background:linear-gradient(90deg,#899910 -2px,#99970c 66px,#997202 233px,#996e01 252px)"></i><i style="background:linear-gradient(90deg,#899910 -2px,#99970c 64px,#997202 231px,#996e01 252px)"></i><i style="background:linear-gradient(90deg,#8a9910 -2px,#99970d 61px,#997202 228px,#996e01 252px)"></i><i style="background:linear-gradient(90deg,#8a9910 -2px,#99970d 59px,#997203 225px,#996d01 252px)"></i><i style="background:linear-gradient(90deg,#8b9911 -2px,#99970d 57px,#997203 223px,#996d01 252px)"></i></div>
<div class="g r3" style="left:1642px;top:124px;width:250px;height:211px;overflow:hidden;clip-path:polygon(0px 21.99px,250px 188.97px,250px 211px,0px 211px)"><i style="background:linear-gradient(90deg,#afff00 -2px,#fffd00 205px,#ffeb00 252px)"></i><i style="background:linear-gradient(90deg,#b0ff00 -2px,#fffd00 202px,#ffea00 252px)"></i><i style="background:linear-gradient(90deg,#b1ff00 -2px,#fffd00 200px,#ffe900 252px)"></i><i style="background:linear-gradient(90deg,#b1ff00 -2px,#fffd00 198px,#ffe800 252px)"></i><i style="background:linear-gradient(90deg,#b2ff00 -2px,#fffd00 196px,#ffe700 252px)"></i><i style="background:linear-gradient(90deg,#b3ff00 -2px,#fffd00 194px,#ffe600 252px)"></i><i style="background:linear-gradient(90deg,#b4ff00 -2px,#fffd00 192px,#ffe600 252px)"></i><i style="background:linear-gradient(90deg,#b4ff00 -2px,#fffd00 189px,#ffe500 252px)"></i><i style="background:linear-gradient(90deg,#b5ff01 -2px,#fffd00 187px,#ffe400 252px)"></i><i style="background:linear-gradient(90deg,#b6ff01 -2px,#fffd00 185px,#ffe300 252px)"></i><i style="background:linear-gradient(90deg,#b6ff01 -2px,#fffd00 183px,#ffe200 252px)"></i><i style="background:linear-gradient(90deg,#b7ff02 -2px,#fffd00 181px,#ffe200 252px)"></i><i style="background:linear-gradient(90deg,#b8ff02 -2px,#fffd00 179px,#ffe100 252px)"></i><i style="background:linear-gradient(90deg,#b8ff03 -2px,#f0ff00 138px,#fffd00 177px,#ffe000 252px)"></i><i style="background:linear-gradient(90deg,#b9ff03 -2px,#e4ff00 107px,#fffd00 175px,#ffdf00 252px)"></i><i style="background:linear-gradient(90deg,#baff03 -2px,#e0ff00 95px,#fffd00 172px,#ffde00 252px)"></i><i style="background:linear-gradient(90deg,#bbff04 -2px,#e0ff00 92px,#fffd00 170px,#ffde00 252px)"></i><i style="background:linear-gradient(90deg,#bbff04 -2px,#e0ff00 91px,#fffd00 168px,#fd0 252px)"></i><i style="background:linear-gradient(90deg,#bcff05 -2px,#e2ff00 92px,#fffd00 166px,#ffdc00 252px)"></i><i style="background:linear-gradient(90deg,#bdff05 -2px,#e3ff00 94px,#fffd00 164px,#ffdb00 252px)"></i><i style="background:linear-gradient(90deg,#beff05 -2px,#e5ff00 96px,#fffd00 162px,#ffda00 252px)"></i><i style="background:linear-gradient(90deg,#beff06 -2px,#e7ff00 99px,#fffd00 160px,#ffda00 252px)"></i><i style="background:linear-gradient(90deg,#bfff06 -2px,#e9ff00 102px,#fffd00 157px,#ffd900 252px)"></i><i style="background:linear-gradient(90deg,#c0ff07 -2px,#ecff00 106px,#fffd00 155px,#ffd800 252px)"></i><i style="background:linear-gradient(90deg,#c1ff07 -2px,#ef0 109px,#fffd00 153px,#ffd700 252px)"></i><i style="background:linear-gradient(90deg,#c1ff07 -2px,#f1ff00 113px,#fffd00 151px,#ffd600 252px)"></i><i style="background:linear-gradient(90deg,#c2ff08 -2px,#f3ff00 116px,#fffd00 149px,#ffd600 252px)"></i><i style="background:linear-gradient(90deg,#c3ff08 -2px,#f6ff00 121px,#fffd00 147px,#ffd500 252px)"></i><i style="background:linear-gradient(90deg,#c4ff09 -2px,#f8ff00 124px,#fffc00 146px,#ffd400 252px)"></i><i style="background:linear-gradient(90deg,#c4ff09 -2px,#fbff00 129px,#fffb00 147px,#ffd300 252px)"></i><i style="background:linear-gradient(90deg,#c5ff09 -2px,#fdff00 132px,#ffd300 252px)"></i><i style="background:linear-gradient(90deg,#c6ff0a -2px,#fffd00 137px,#ffd200 252px)"></i><i style="background:linear-gradient(90deg,#c7ff0a -2px,#fffd00 135px,#ffd100 252px)"></i><i style="background:linear-gradient(90deg,#c8ff0b -2px,#fffd00 133px,#ffd000 252px)"></i><i style="background:linear-gradient(90deg,#c8ff0b -2px,#fffd00 131px,#ffd000 252px)"></i><i style="background:linear-gradient(90deg,#c9ff0c -2px,#fffd00 129px,#ffcf00 252px)"></i><i style="background:linear-gradient(90deg,#caff0c -2px,#fffd00 127px,#ffce00 252px)"></i><i style="background:linear-gradient(90deg,#cbff0c -2px,#fffd01 125px,#ffcd00 252px)"></i><i style="background:linear-gradient(90deg,#cbff0d -2px,#fffd02 122px,#ffcd00 251px,#fc0 252px)"></i><i style="background:linear-gradient(90deg,#ccff0d -2px,#fffd02 120px,#ffcd00 249px,#fc0 252px)"></i><i style="background:linear-gradient(90deg,#cdff0e -2px,#fffd03 118px,#ffd700 216px,#ffcb00 252px)"></i><i style="background:linear-gradient(90deg,#ceff0e -2px,#fffd04 116px,#ffdb00 203px,#ffca00 252px)"></i><i style="background:linear-gradient(90deg,#cfff0f -2px,#fffd04 114px,#ffdb00 199px,#ffc900 252px)"></i><i style="background:linear-gradient(90deg,#d0ff0f -2px,#fffd05 112px,#ffda00 199px,#ffc900 252px)"></i><i style="background:linear-gradient(90deg,#d0ff0f -2px,#fffd06 109px,#ffd900 200px,#ffc800 252px)"></i><i style="background:linear-gradient(90deg,#d1ff10 -2px,#fffd06 107px,#ffd700 203px,#ffc700 252px)"></i><i style="background:linear-gradient(90deg,#d2ff10 -2px,#fffd07 105px,#ffd600 205px,#ffc600 252px)"></i><i style="background:linear-gradient(90deg,#d3ff11 -2px,#fffd07 103px,#ffd400 209px,#ffc600 252px)"></i><i style="background:linear-gradient(90deg,#d4ff11 -2px,#fffd08 101px,#ffd200 213px,#ffc500 252px)"></i><i style="background:linear-gradient(90deg,#d5ff12 -2px,#fffd09 99px,#ffd000 216px,#ffc400 252px)"></i><i style="background:linear-gradient(90deg,#d5ff12 -2px,#fffd09 97px,#ffce00 220px,#ffc400 252px)"></i><i style="background:linear-gradient(90deg,#d6ff13 -2px,#fffd0a 94px,#ffcd00 221px,#ffc300 252px)"></i><i style="background:linear-gradient(90deg,#d7ff13 -2px,#fffd0b 92px,#ffcd00 218px,#ffc200 252px)"></i><i style="background:linear-gradient(90deg,#d8ff14 -2px,#fffd0b 90px,#ffcd00 216px,#ffc100 252px)"></i><i style="background:linear-gradient(90deg,#d9ff14 -2px,#fffd0c 88px,#fc0 214px,#ffc100 252px)"></i><i style="background:linear-gradient(90deg,#daff15 -2px,#fffd0d 86px,#fc0 212px,#ffc000 252px)"></i><i style="background:linear-gradient(90deg,#dbff15 -2px,#fffd0d 84px,#ffcc01 210px,#ffbf00 252px)"></i><i style="background:linear-gradient(90deg,#dbff15 -2px,#fffd0e 81px,#ffcd02 206px,#ffbe00 252px)"></i><i style="background:linear-gradient(90deg,#dcff16 -2px,#fffd0f 79px,#ffcd02 204px,#ffbe00 252px)"></i><i style="background:linear-gradient(90deg,#ddff16 -2px,#fffd0f 77px,#ffcd03 202px,#ffbd00 252px)"></i><i style="background:linear-gradient(90deg,#deff17 -2px,#fffd10 75px,#ffcc03 200px,#ffbc00 252px)"></i><i style="background:linear-gradient(90deg,#dfff17 -2px,#fffd11 73px,#ffcc04 198px,#ffbc00 252px)"></i><i style="background:linear-gradient(90deg,#e0ff18 -2px,#fffd11 71px,#ffcc04 195px,#fb0 252px)"></i><i style="background:linear-gradient(90deg,#e1ff18 -2px,#fffd12 68px,#ffcd05 192px,#ffba00 252px)"></i><i style="background:linear-gradient(90deg,#e2ff19 -2px,#fffd13 66px,#ffcd06 190px,#ffb900 252px)"></i><i style="background:linear-gradient(90deg,#e3ff19 -2px,#fffd13 64px,#ffcc06 188px,#ffb901 252px)"></i><i style="background:linear-gradient(90deg,#e4ff1a -2px,#fffd14 62px,#ffcc07 186px,#ffb801 252px)"></i><i style="background:linear-gradient(90deg,#e5ff1a -2px,#fffd15 60px,#ffcd07 183px,#ffb701 252px)"></i><i style="background:linear-gradient(90deg,#e5ff1b -2px,#fffd15 58px,#ffcc08 181px,#ffb702 252px)"></i><i style="background:linear-gradient(90deg,#e6ff1b -2px,#fffd16 56px,#ffcc08 179px,#ffb602 252px)"></i><i style="background:linear-gradient(90deg,#e7ff1c -2px,#fffd17 53px,#ffcd09 176px,#ffb502 252px)"></i></div>
<svg width="1920" height="1044" viewBox="0 0 1920 1044">
<rect x="1640.5" y="122.6" width="253.4" height="213.7" fill="none" stroke="#2e2e2e" stroke-width="2.6"/>
<rect x="1642.3" y="124.4" width="249.8" height="210.1" fill="none" stroke="#8c8c8c" stroke-width="1.3"/>
<rect x="1483.45" y="448.65" width="15.1" height="15.1" fill="none" stroke="#fff" stroke-width="1.7"/>
<rect x="1542.35" y="448.65" width="15.1" height="15.1" fill="none" stroke="#fff" stroke-width="1.7"/>
<rect x="1594.85" y="448.65" width="15.1" height="15.1" fill="none" stroke="#fff" stroke-width="1.7"/>
<rect x="1650.85" y="448.65" width="15.1" height="15.1" fill="none" stroke="#fff" stroke-width="1.7"/>
<rect x="1714.45" y="448.65" width="15.1" height="15.1" fill="none" stroke="#fff" stroke-width="1.7"/>
<rect x="1424.45" y="413.05" width="15.1" height="15.1" fill="none" stroke="#fff" stroke-width="1.7"/>
<rect x="1422.95" y="377.45" width="15.1" height="15.1" fill="none" stroke="#fff" stroke-width="1.7"/>
<rect x="1420.05" y="342.95" width="15.1" height="15.1" fill="none" stroke="#fff" stroke-width="1.7"/>
<rect x="1418.2" y="307.45" width="15.1" height="15.1" fill="none" stroke="#fff" stroke-width="1.7"/>
<rect x="1414.95" y="268.45" width="15.1" height="15.1" fill="none" stroke="#fff" stroke-width="1.7"/>
<rect x="1397.95" y="485.75" width="15.1" height="15.1" fill="none" stroke="#fff" stroke-width="1.7"/>
<rect x="1369.95" y="521.25" width="15.1" height="15.1" fill="none" stroke="#fff" stroke-width="1.7"/>
<rect x="1342.2" y="555.65" width="15.1" height="15.1" fill="none" stroke="#fff" stroke-width="1.7"/>
<rect x="1314.45" y="590.25" width="15.1" height="15.1" fill="none" stroke="#fff" stroke-width="1.7"/>
<rect x="1283.25" y="628.45" width="15.1" height="15.1" fill="none" stroke="#fff" stroke-width="1.7"/>
<rect x="1412.85" y="450.15" width="15.1" height="15.1" fill="none" stroke="#fff" stroke-width="1.7"/>
<rect x="1397.85" y="450.15" width="15.1" height="15.1" fill="none" stroke="#fff" stroke-width="1.7"/>
<rect x="1382.2" y="450.15" width="15.1" height="15.1" fill="none" stroke="#fff" stroke-width="1.7"/>
<rect x="1366.55" y="450.15" width="15.1" height="15.1" fill="none" stroke="#fff" stroke-width="1.7"/>
<rect x="1350.35" y="450.15" width="15.1" height="15.1" fill="none" stroke="#fff" stroke-width="1.7"/>
<rect x="1428.95" y="473.25" width="15.1" height="15.1" fill="none" stroke="#fff" stroke-width="1.7"/>
<rect x="1430.55" y="498.35" width="15.1" height="15.1" fill="none" stroke="#fff" stroke-width="1.7"/>
<rect x="1430.95" y="518.2" width="15.1" height="15.1" fill="none" stroke="#fff" stroke-width="1.7"/>
<rect x="1431.95" y="541.85" width="15.1" height="15.1" fill="none" stroke="#fff" stroke-width="1.7"/>
<rect x="1433.55" y="566.45" width="15.1" height="15.1" fill="none" stroke="#fff" stroke-width="1.7"/>
<rect x="1445.75" y="426.1" width="15.1" height="15.1" fill="none" stroke="#fff" stroke-width="1.7"/>
<rect x="1465.07" y="401.73" width="15.1" height="15.1" fill="none" stroke="#fff" stroke-width="1.7"/>
<rect x="1483.42" y="378.7" width="15.1" height="15.1" fill="none" stroke="#fff" stroke-width="1.7"/>
<rect x="1500.63" y="357.08" width="15.1" height="15.1" fill="none" stroke="#fff" stroke-width="1.7"/>
<rect x="1520.3" y="332.31" width="15.1" height="15.1" fill="none" stroke="#fff" stroke-width="1.7"/>
<rect x="1427.6" y="450.3" width="14.8" height="14.8" fill="none" stroke="#000" stroke-width="2"/>
<circle cx="1497.1" cy="448.5" r="4.9" fill="#bea5a5" stroke="#000" stroke-width="1.3"/>
<circle cx="1560.9" cy="450" r="4.9" fill="#be8787" stroke="#000" stroke-width="1.3"/>
<circle cx="1613.5" cy="450" r="4.9" fill="#be6969" stroke="#000" stroke-width="1.3"/>
<circle cx="1671" cy="451.5" r="4.9" fill="#c34646" stroke="#000" stroke-width="1.3"/>
<circle cx="1725" cy="453.1" r="4.9" fill="#c80000" stroke="#000" stroke-width="1.3"/>
<circle cx="1435" cy="412.75" r="4.9" fill="#9cb49c" stroke="#000" stroke-width="1.3"/>
<circle cx="1432" cy="375.1" r="4.9" fill="#80b480" stroke="#000" stroke-width="1.3"/>
<circle cx="1429" cy="341.6" r="4.9" fill="#63b463" stroke="#000" stroke-width="1.3"/>
<circle cx="1427.25" cy="310.6" r="4.9" fill="#42b442" stroke="#000" stroke-width="1.3"/>
<circle cx="1424.4" cy="277.75" r="4.9" fill="#009b00" stroke="#000" stroke-width="1.3"/>
<circle cx="1406.9" cy="483.9" r="4.9" fill="#9494b4" stroke="#000" stroke-width="1.3"/>
<circle cx="1376" cy="521.5" r="4.9" fill="#7979b4" stroke="#000" stroke-width="1.3"/>
<circle cx="1346.5" cy="556.9" r="4.9" fill="#5e5eb4" stroke="#000" stroke-width="1.3"/>
<circle cx="1317.1" cy="592.75" r="4.9" fill="#3f3fb4" stroke="#000" stroke-width="1.3"/>
<circle cx="1284.6" cy="630" r="4.9" fill="#0000c8" stroke="#000" stroke-width="1.3"/>
<circle cx="1421" cy="448.5" r="4.9" fill="#a5bebe" stroke="#000" stroke-width="1.3"/>
<circle cx="1404" cy="448.5" r="4.9" fill="#87bebe" stroke="#000" stroke-width="1.3"/>
<circle cx="1386.9" cy="448.5" r="4.9" fill="#69bebe" stroke="#000" stroke-width="1.3"/>
<circle cx="1371.5" cy="448.5" r="4.9" fill="#46c3c3" stroke="#000" stroke-width="1.3"/>
<circle cx="1357.5" cy="448.5" r="4.9" fill="#00c8c8" stroke="#000" stroke-width="1.3"/>
<circle cx="1437.75" cy="471.9" r="4.9" fill="#bea5be" stroke="#000" stroke-width="1.3"/>
<circle cx="1439.75" cy="498.1" r="4.9" fill="#be87be" stroke="#000" stroke-width="1.3"/>
<circle cx="1441.25" cy="518.4" r="4.9" fill="#be69be" stroke="#000" stroke-width="1.3"/>
<circle cx="1442.9" cy="542.9" r="4.9" fill="#c346c3" stroke="#000" stroke-width="1.3"/>
<circle cx="1446" cy="566.25" r="4.9" fill="#c800c8" stroke="#000" stroke-width="1.3"/>
<circle cx="1455.32" cy="426.57" r="4.9" fill="#bebea5" stroke="#000" stroke-width="1.3"/>
<circle cx="1476.48" cy="401.27" r="4.9" fill="#bebe87" stroke="#000" stroke-width="1.3"/>
<circle cx="1495.1" cy="378.98" r="4.9" fill="#bebe69" stroke="#000" stroke-width="1.3"/>
<circle cx="1511.6" cy="359.29" r="4.9" fill="#c3c346" stroke="#000" stroke-width="1.3"/>
<circle cx="1528.81" cy="338.66" r="4.9" fill="#c8c800" stroke="#000" stroke-width="1.3"/>
<circle cx="1436.5" cy="450" r="4.9" fill="#fff" stroke="#000" stroke-width="1.3"/>
<rect x="1757.85" y="221.15" width="15.1" height="15.1" fill="none" stroke="#fff" stroke-width="1.7"/>
<circle cx="1771.5" cy="220.9" r="4.9" fill="#c8c800" stroke="#000" stroke-width="1.3"/>
</svg>
</body></html>
